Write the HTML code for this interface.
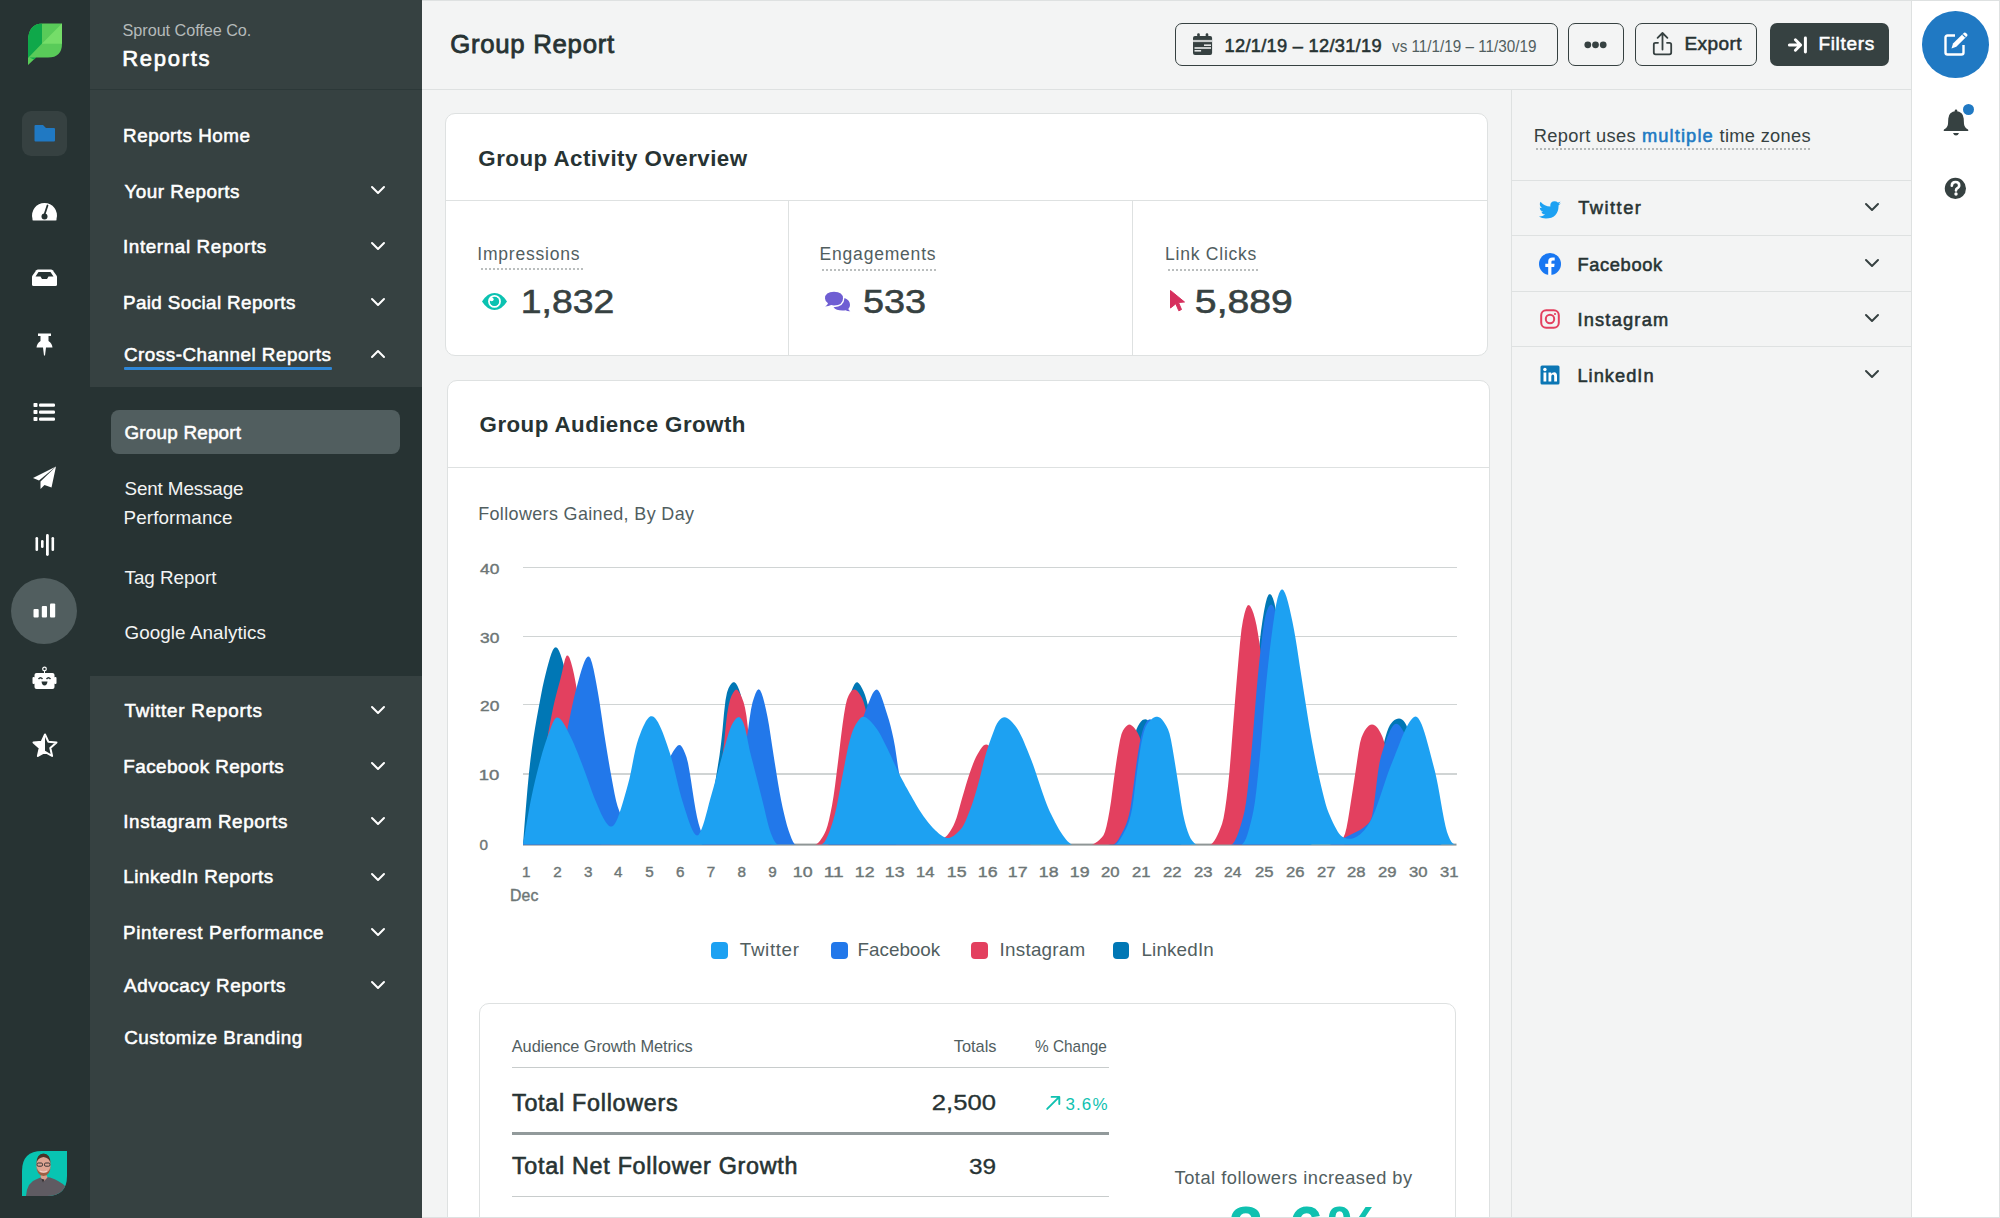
<!DOCTYPE html>
<html><head><meta charset="utf-8"><title>Group Report</title>
<style>
html,body{margin:0;padding:0;}
body{width:2000px;height:1218px;overflow:hidden;position:relative;background:#f3f4f4;font-family:"Liberation Sans",sans-serif;}
.b{position:absolute;}
.t{position:absolute;white-space:nowrap;}
svg.b{overflow:visible;}
</style></head><body>
<div class="b" style="left:0px;top:0px;width:90px;height:1218px;background:#273333"></div>
<div class="b" style="left:90px;top:0px;width:332px;height:1218px;background:#364141"></div>
<div class="b" style="left:90px;top:89px;width:332px;height:1px;background:#2c3838"></div>
<div class="b" style="left:90px;top:387px;width:332px;height:289px;background:#273333"></div>
<div class="b" style="left:422px;top:0px;width:1578px;height:1px;background:#dee1e1"></div>
<div class="b" style="left:422px;top:89px;width:1490px;height:1px;background:#dee1e1"></div>
<div class="b" style="left:1511px;top:90px;width:1px;height:1128px;background:#dee1e1"></div>
<div class="b" style="left:1512px;top:180px;width:400px;height:1px;background:#dee1e1"></div>
<div class="b" style="left:1512px;top:235px;width:400px;height:1px;background:#dee1e1"></div>
<div class="b" style="left:1512px;top:291px;width:400px;height:1px;background:#dee1e1"></div>
<div class="b" style="left:1512px;top:346px;width:400px;height:1px;background:#dee1e1"></div>
<div class="b" style="left:1911px;top:1px;width:89px;height:1217px;background:#fff"></div>
<div class="b" style="left:1911px;top:0px;width:1px;height:1218px;background:#dee1e1"></div>
<div class="b" style="left:1999px;top:0px;width:1px;height:1218px;background:#dee1e1"></div>
<div class="b" style="left:445px;top:113px;width:1043px;height:243px;background:#fff;border:1px solid #dee1e1;border-radius:10px;box-sizing:border-box"></div>
<div class="b" style="left:446px;top:200px;width:1041px;height:1px;background:#dee1e1"></div>
<div class="b" style="left:787.5px;top:201px;width:1px;height:154px;background:#dee1e1"></div>
<div class="b" style="left:1131.5px;top:201px;width:1px;height:154px;background:#dee1e1"></div>
<div class="b" style="left:479.5px;top:267.5px;width:104px;height:2px;background-image:radial-gradient(circle,#6d7676 0.55px,transparent 0.85px);background-size:4px 2px;background-repeat:repeat-x"></div>
<div class="b" style="left:821px;top:268.5px;width:115px;height:2px;background-image:radial-gradient(circle,#6d7676 0.55px,transparent 0.85px);background-size:4px 2px;background-repeat:repeat-x"></div>
<div class="b" style="left:1166.5px;top:268.5px;width:91px;height:2px;background-image:radial-gradient(circle,#6d7676 0.55px,transparent 0.85px);background-size:4px 2px;background-repeat:repeat-x"></div>
<div class="b" style="left:1535px;top:147.5px;width:276px;height:2px;background-image:radial-gradient(circle,#6d7676 0.55px,transparent 0.85px);background-size:4px 2px;background-repeat:repeat-x"></div>
<div class="b" style="left:447px;top:380px;width:1043px;height:900px;background:#fff;border:1px solid #dee1e1;border-radius:10px;box-sizing:border-box"></div>
<div class="b" style="left:448px;top:467px;width:1041px;height:1px;background:#dee1e1"></div>
<div class="b" style="left:523px;top:566.8px;width:933.5px;height:1.3px;background:#d0d4d4"></div>
<div class="b" style="left:523px;top:636.1px;width:933.5px;height:1.3px;background:#d0d4d4"></div>
<div class="b" style="left:523px;top:704.0px;width:933.5px;height:1.3px;background:#d0d4d4"></div>
<div class="b" style="left:523px;top:773.4px;width:933.5px;height:1.3px;background:#d0d4d4"></div>
<svg class="b" style="left:0;top:0" width="2000" height="1218" viewBox="0 0 2000 1218"><rect x="523" y="843.6" width="933.5" height="2" fill="#8f9696"/><path d="M523.0,844.5 L523.0,844.5 L524.5,824.9 L526.0,806.2 L527.5,788.6 L529.0,772.8 L530.5,759.3 L532.0,747.8 L533.5,737.6 L535.0,728.2 L536.5,719.5 L538.0,711.2 L539.5,703.2 L541.0,695.2 L542.5,687.6 L544.0,680.7 L545.5,674.4 L547.0,668.5 L548.5,662.9 L550.0,657.7 L551.5,653.3 L553.0,649.8 L554.5,647.7 L556.0,647.2 L557.5,648.3 L559.0,650.8 L560.5,654.5 L562.0,659.1 L563.5,664.3 L565.0,670.2 L566.5,676.9 L568.0,684.7 L569.5,693.5 L571.0,703.0 L572.5,713.0 L574.0,723.1 L575.5,733.1 L577.0,742.7 L578.5,751.7 L580.0,759.9 L581.5,767.6 L583.0,775.2 L584.5,782.9 L586.0,790.4 L587.5,797.8 L589.0,805.0 L590.5,811.9 L592.0,818.5 L593.5,824.6 L595.0,830.2 L596.5,835.2 L598.0,839.6 L599.5,842.9 L601.0,844.3 L602.5,844.5 L604.0,844.5 L605.5,844.5 L607.0,844.5 L608.5,844.5 L610.0,844.5 L611.5,844.5 L613.0,844.5 L614.5,844.5 L616.0,844.5 L617.5,844.5 L619.0,844.5 L620.5,844.5 L622.0,844.5 L623.5,844.5 L625.0,844.5 L626.5,844.5 L628.0,844.5 L629.5,844.5 L631.0,844.5 L632.5,844.5 L634.0,844.5 L635.5,844.5 L637.0,844.5 L638.5,844.5 L640.0,844.5 L641.5,844.5 L643.0,844.5 L644.5,844.5 L646.0,844.5 L647.5,844.5 L649.0,844.5 L650.5,844.5 L652.0,844.5 L653.5,844.5 L655.0,844.5 L656.5,844.5 L658.0,844.5 L659.5,844.5 L661.0,844.5 L662.5,844.5 L664.0,844.5 L665.5,844.5 L667.0,844.5 L668.5,844.5 L670.0,844.5 L671.5,844.5 L673.0,844.5 L674.5,844.5 L676.0,844.5 L677.5,844.5 L679.0,844.5 L680.5,844.5 L682.0,844.5 L683.5,844.5 L685.0,844.5 L686.5,844.5 L688.0,844.5 L689.5,844.5 L691.0,844.5 L692.5,844.5 L694.0,844.5 L695.5,844.5 L697.0,844.5 L698.5,844.5 L700.0,844.5 L701.5,844.5 L703.0,843.7 L704.5,840.1 L706.0,834.6 L707.5,827.8 L709.0,820.2 L710.5,812.1 L712.0,803.1 L713.5,793.4 L715.0,783.6 L716.5,774.2 L718.0,765.1 L719.5,755.4 L721.0,744.1 L722.5,729.9 L724.0,713.3 L725.5,700.3 L727.0,692.5 L728.5,688.3 L730.0,685.5 L731.5,683.4 L733.0,682.2 L734.5,682.3 L736.0,683.6 L737.5,686.0 L739.0,689.4 L740.5,693.9 L742.0,699.9 L743.5,707.3 L745.0,716.0 L746.5,725.5 L748.0,735.6 L749.5,745.9 L751.0,756.0 L752.5,765.6 L754.0,774.5 L755.5,782.4 L757.0,790.0 L758.5,797.4 L760.0,804.7 L761.5,811.7 L763.0,818.5 L764.5,825.0 L766.0,831.0 L767.5,836.5 L769.0,841.1 L770.5,843.9 L772.0,844.5 L773.5,844.5 L775.0,844.5 L776.5,844.5 L778.0,844.5 L779.5,844.5 L781.0,844.5 L782.5,844.5 L784.0,844.5 L785.5,844.5 L787.0,844.5 L788.5,844.5 L790.0,844.5 L791.5,844.5 L793.0,844.5 L794.5,844.5 L796.0,844.5 L797.5,844.5 L799.0,844.5 L800.5,844.5 L802.0,844.5 L803.5,844.5 L805.0,844.5 L806.5,844.5 L808.0,844.5 L809.5,844.5 L811.0,844.5 L812.5,844.5 L814.0,844.5 L815.5,844.5 L817.0,844.5 L818.5,844.5 L820.0,844.5 L821.5,844.5 L823.0,844.5 L824.5,844.5 L826.0,844.5 L827.5,844.5 L829.0,844.1 L830.5,841.4 L832.0,834.3 L833.5,824.0 L835.0,811.5 L836.5,797.4 L838.0,782.5 L839.5,767.4 L841.0,752.7 L842.5,739.1 L844.0,727.2 L845.5,717.2 L847.0,708.4 L848.5,700.9 L850.0,695.3 L851.5,690.9 L853.0,687.2 L854.5,684.2 L856.0,682.4 L857.5,682.3 L859.0,683.4 L860.5,685.5 L862.0,688.2 L863.5,691.2 L865.0,695.0 L866.5,699.9 L868.0,705.8 L869.5,713.0 L871.0,721.6 L872.5,731.2 L874.0,741.4 L875.5,751.7 L877.0,761.9 L878.5,771.3 L880.0,779.9 L881.5,787.9 L883.0,795.8 L884.5,803.7 L886.0,811.4 L887.5,818.7 L889.0,825.5 L890.5,831.6 L892.0,836.9 L893.5,841.1 L895.0,843.8 L896.5,844.5 L898.0,844.5 L899.5,844.5 L901.0,844.5 L902.5,844.5 L904.0,844.5 L905.5,844.5 L907.0,844.5 L908.5,844.5 L910.0,844.5 L911.5,844.5 L913.0,844.5 L914.5,844.5 L916.0,844.5 L917.5,844.5 L919.0,844.5 L920.5,844.5 L922.0,844.5 L923.5,844.5 L925.0,844.5 L926.5,844.5 L928.0,844.5 L929.5,844.5 L931.0,844.5 L932.5,844.5 L934.0,844.5 L935.5,844.5 L937.0,844.5 L938.5,844.5 L940.0,844.5 L941.5,844.5 L943.0,844.5 L944.5,844.5 L946.0,844.5 L947.5,844.5 L949.0,844.5 L950.5,844.5 L952.0,844.5 L953.5,844.5 L955.0,844.5 L956.5,844.5 L958.0,844.5 L959.5,844.5 L961.0,844.5 L962.5,844.5 L964.0,844.5 L965.5,844.5 L967.0,844.5 L968.5,844.5 L970.0,844.5 L971.5,844.5 L973.0,844.5 L974.5,844.5 L976.0,844.5 L977.5,844.5 L979.0,844.5 L980.5,844.5 L982.0,844.5 L983.5,844.5 L985.0,844.5 L986.5,844.5 L988.0,844.5 L989.5,844.5 L991.0,844.5 L992.5,844.5 L994.0,844.5 L995.5,844.5 L997.0,844.5 L998.5,844.5 L1000.0,844.5 L1001.5,844.5 L1003.0,844.5 L1004.5,844.5 L1006.0,844.5 L1007.5,844.5 L1009.0,844.5 L1010.5,844.5 L1012.0,844.5 L1013.5,844.5 L1015.0,844.5 L1016.5,844.5 L1018.0,844.5 L1019.5,844.5 L1021.0,844.5 L1022.5,844.5 L1024.0,844.5 L1025.5,844.5 L1027.0,844.5 L1028.5,844.5 L1030.0,844.5 L1031.5,844.5 L1033.0,844.5 L1034.5,844.5 L1036.0,844.5 L1037.5,844.5 L1039.0,844.5 L1040.5,844.5 L1042.0,844.5 L1043.5,844.5 L1045.0,844.5 L1046.5,844.5 L1048.0,844.5 L1049.5,844.5 L1051.0,844.5 L1052.5,844.5 L1054.0,844.5 L1055.5,844.5 L1057.0,844.5 L1058.5,844.5 L1060.0,844.5 L1061.5,844.5 L1063.0,844.5 L1064.5,844.5 L1066.0,844.5 L1067.5,844.5 L1069.0,844.5 L1070.5,844.5 L1072.0,844.5 L1073.5,844.5 L1075.0,844.5 L1076.5,844.5 L1078.0,844.5 L1079.5,844.5 L1081.0,844.5 L1082.5,844.5 L1084.0,844.5 L1085.5,844.5 L1087.0,844.5 L1088.5,844.5 L1090.0,844.5 L1091.5,844.5 L1093.0,844.5 L1094.5,844.5 L1096.0,844.5 L1097.5,844.5 L1099.0,844.5 L1100.5,844.5 L1102.0,844.5 L1103.5,844.5 L1105.0,844.5 L1106.5,844.5 L1108.0,844.5 L1109.5,844.2 L1111.0,842.7 L1112.5,840.1 L1114.0,836.8 L1115.5,833.0 L1117.0,828.7 L1118.5,824.0 L1120.0,818.9 L1121.5,813.5 L1123.0,807.9 L1124.5,801.8 L1126.0,794.8 L1127.5,785.9 L1129.0,775.3 L1130.5,764.1 L1132.0,753.0 L1133.5,742.9 L1135.0,734.8 L1136.5,729.3 L1138.0,725.9 L1139.5,723.4 L1141.0,721.5 L1142.5,720.1 L1144.0,719.4 L1145.5,719.2 L1147.0,719.7 L1148.5,720.9 L1150.0,723.0 L1151.5,726.5 L1153.0,731.2 L1154.5,736.8 L1156.0,743.0 L1157.5,749.5 L1159.0,755.9 L1160.5,762.0 L1162.0,768.3 L1163.5,774.9 L1165.0,781.7 L1166.5,788.7 L1168.0,795.7 L1169.5,802.8 L1171.0,809.8 L1172.5,816.5 L1174.0,823.0 L1175.5,829.1 L1177.0,834.8 L1178.5,839.8 L1180.0,843.6 L1181.5,844.5 L1183.0,844.5 L1184.5,844.5 L1186.0,844.5 L1187.5,844.5 L1189.0,844.5 L1190.5,844.5 L1192.0,844.5 L1193.5,844.5 L1195.0,844.5 L1196.5,844.5 L1198.0,844.5 L1199.5,844.5 L1201.0,844.5 L1202.5,844.5 L1204.0,844.5 L1205.5,844.5 L1207.0,844.5 L1208.5,844.5 L1210.0,844.5 L1211.5,844.5 L1213.0,844.5 L1214.5,844.5 L1216.0,844.5 L1217.5,844.5 L1219.0,844.5 L1220.5,844.5 L1222.0,844.5 L1223.5,844.5 L1225.0,844.5 L1226.5,844.5 L1228.0,844.5 L1229.5,844.5 L1231.0,844.5 L1232.5,844.5 L1234.0,844.3 L1235.5,842.9 L1237.0,839.3 L1238.5,834.0 L1240.0,827.3 L1241.5,819.4 L1243.0,810.5 L1244.5,800.7 L1246.0,790.2 L1247.5,779.2 L1249.0,767.7 L1250.5,755.0 L1252.0,739.5 L1253.5,721.0 L1255.0,700.7 L1256.5,680.1 L1258.0,660.7 L1259.5,644.0 L1261.0,630.9 L1262.5,620.4 L1264.0,611.3 L1265.5,603.8 L1267.0,598.1 L1268.5,594.8 L1270.0,594.0 L1271.5,595.2 L1273.0,598.4 L1274.5,603.5 L1276.0,610.8 L1277.5,620.2 L1279.0,631.3 L1280.5,643.6 L1282.0,656.2 L1283.5,668.4 L1285.0,679.9 L1286.5,691.0 L1288.0,702.5 L1289.5,714.4 L1291.0,726.6 L1292.5,738.9 L1294.0,751.2 L1295.5,763.4 L1297.0,775.2 L1298.5,786.7 L1300.0,797.5 L1301.5,807.6 L1303.0,816.8 L1304.5,825.0 L1306.0,832.1 L1307.5,837.8 L1309.0,842.0 L1310.5,844.1 L1312.0,844.5 L1313.5,844.5 L1315.0,844.5 L1316.5,844.5 L1318.0,844.5 L1319.5,844.5 L1321.0,844.5 L1322.5,844.5 L1324.0,844.5 L1325.5,844.5 L1327.0,844.5 L1328.5,844.5 L1330.0,844.5 L1331.5,844.5 L1333.0,844.5 L1334.5,844.5 L1336.0,844.5 L1337.5,844.5 L1339.0,844.5 L1340.5,844.5 L1342.0,844.5 L1343.5,844.5 L1345.0,844.1 L1346.5,842.6 L1348.0,840.7 L1349.5,838.6 L1351.0,836.5 L1352.5,834.3 L1354.0,831.9 L1355.5,829.5 L1357.0,827.0 L1358.5,824.3 L1360.0,821.5 L1361.5,818.6 L1363.0,815.6 L1364.5,812.5 L1366.0,809.3 L1367.5,805.9 L1369.0,802.4 L1370.5,798.5 L1372.0,794.0 L1373.5,788.7 L1375.0,782.8 L1376.5,776.3 L1378.0,769.5 L1379.5,762.6 L1381.0,755.7 L1382.5,749.1 L1384.0,742.8 L1385.5,737.1 L1387.0,732.1 L1388.5,728.1 L1390.0,725.1 L1391.5,723.0 L1393.0,721.3 L1394.5,720.1 L1396.0,719.2 L1397.5,718.7 L1399.0,718.5 L1400.5,718.7 L1402.0,719.5 L1403.5,720.8 L1405.0,722.7 L1406.5,725.6 L1408.0,730.2 L1409.5,736.3 L1411.0,743.6 L1412.5,751.7 L1414.0,760.2 L1415.5,768.7 L1417.0,776.7 L1418.5,783.8 L1420.0,789.8 L1421.5,795.2 L1423.0,800.3 L1424.5,805.4 L1426.0,810.4 L1427.5,815.3 L1429.0,819.9 L1430.5,824.4 L1432.0,828.5 L1433.5,832.4 L1435.0,835.9 L1436.5,839.0 L1438.0,841.6 L1439.5,843.6 L1441.0,844.4 L1442.5,844.5 L1444.0,844.5 L1445.5,844.5 L1447.0,844.5 L1448.5,844.5 L1450.0,844.5 L1451.5,844.5 L1453.0,844.5 L1454.5,844.5 L1456.0,844.5 L1456.5,844.5 Z" fill="#0077b5"/>
<path d="M523.0,844.5 L523.0,844.5 L524.5,840.4 L526.0,836.1 L527.5,831.3 L529.0,826.2 L530.5,820.6 L532.0,814.8 L533.5,808.7 L535.0,802.4 L536.5,795.9 L538.0,789.1 L539.5,782.2 L541.0,774.9 L542.5,766.8 L544.0,758.1 L545.5,749.1 L547.0,740.1 L548.5,731.6 L550.0,723.5 L551.5,715.7 L553.0,708.3 L554.5,701.5 L556.0,695.4 L557.5,689.8 L559.0,684.3 L560.5,678.8 L562.0,672.6 L563.5,665.6 L565.0,659.3 L566.5,655.8 L568.0,655.5 L569.5,657.8 L571.0,662.2 L572.5,667.8 L574.0,674.3 L575.5,681.9 L577.0,690.8 L578.5,700.4 L580.0,709.9 L581.5,719.3 L583.0,728.9 L584.5,738.7 L586.0,748.5 L587.5,758.3 L589.0,767.7 L590.5,776.7 L592.0,785.2 L593.5,792.9 L595.0,799.9 L596.5,806.1 L598.0,812.0 L599.5,817.6 L601.0,822.7 L602.5,827.5 L604.0,831.8 L605.5,835.7 L607.0,839.1 L608.5,842.0 L610.0,844.0 L611.5,844.5 L613.0,844.5 L614.5,844.5 L616.0,844.5 L617.5,844.5 L619.0,844.5 L620.5,844.5 L622.0,844.5 L623.5,844.5 L625.0,844.5 L626.5,844.5 L628.0,844.5 L629.5,844.5 L631.0,844.5 L632.5,844.5 L634.0,844.5 L635.5,844.5 L637.0,844.5 L638.5,844.5 L640.0,844.5 L641.5,844.5 L643.0,844.5 L644.5,844.5 L646.0,844.5 L647.5,844.5 L649.0,844.5 L650.5,844.5 L652.0,844.5 L653.5,844.5 L655.0,844.5 L656.5,844.5 L658.0,844.5 L659.5,844.5 L661.0,844.5 L662.5,844.5 L664.0,844.5 L665.5,844.5 L667.0,844.5 L668.5,844.5 L670.0,844.5 L671.5,844.5 L673.0,844.5 L674.5,844.5 L676.0,844.5 L677.5,844.5 L679.0,844.5 L680.5,844.5 L682.0,844.5 L683.5,844.5 L685.0,844.5 L686.5,844.5 L688.0,844.5 L689.5,844.5 L691.0,844.5 L692.5,844.5 L694.0,844.5 L695.5,844.5 L697.0,844.5 L698.5,844.5 L700.0,844.5 L701.5,844.5 L703.0,844.5 L704.5,844.0 L706.0,841.8 L707.5,837.3 L709.0,831.4 L710.5,824.3 L712.0,816.6 L713.5,808.5 L715.0,800.4 L716.5,792.2 L718.0,783.5 L719.5,774.3 L721.0,765.1 L722.5,755.6 L724.0,744.0 L725.5,728.3 L727.0,714.9 L728.5,705.9 L730.0,699.8 L731.5,695.8 L733.0,692.9 L734.5,690.7 L736.0,689.6 L737.5,690.0 L739.0,691.9 L740.5,694.6 L742.0,697.9 L743.5,701.9 L745.0,707.7 L746.5,716.3 L748.0,728.9 L749.5,740.4 L751.0,750.6 L752.5,760.1 L754.0,769.1 L755.5,777.4 L757.0,785.1 L758.5,792.4 L760.0,799.6 L761.5,807.0 L763.0,814.3 L764.5,821.4 L766.0,827.9 L767.5,833.7 L769.0,838.5 L770.5,842.0 L772.0,844.0 L773.5,844.5 L775.0,844.5 L776.5,844.5 L778.0,844.5 L779.5,844.5 L781.0,844.5 L782.5,844.5 L784.0,844.5 L785.5,844.5 L787.0,844.5 L788.5,844.5 L790.0,844.5 L791.5,844.5 L793.0,844.5 L794.5,844.5 L796.0,844.5 L797.5,844.5 L799.0,844.5 L800.5,844.5 L802.0,844.5 L803.5,844.5 L805.0,844.5 L806.5,844.5 L808.0,844.5 L809.5,844.5 L811.0,844.5 L812.5,844.5 L814.0,844.5 L815.5,844.4 L817.0,843.8 L818.5,842.4 L820.0,840.7 L821.5,838.6 L823.0,836.2 L824.5,833.6 L826.0,830.3 L827.5,825.8 L829.0,820.0 L830.5,813.1 L832.0,805.4 L833.5,796.6 L835.0,786.0 L836.5,774.1 L838.0,761.9 L839.5,749.4 L841.0,736.7 L842.5,724.9 L844.0,714.5 L845.5,705.7 L847.0,699.5 L848.5,695.8 L850.0,693.1 L851.5,691.0 L853.0,689.7 L854.5,689.4 L856.0,690.0 L857.5,691.3 L859.0,693.2 L860.5,695.4 L862.0,698.1 L863.5,701.8 L865.0,706.9 L866.5,713.0 L868.0,720.0 L869.5,728.1 L871.0,737.2 L872.5,746.8 L874.0,756.7 L875.5,766.3 L877.0,775.2 L878.5,783.1 L880.0,789.8 L881.5,795.6 L883.0,801.0 L884.5,806.2 L886.0,811.1 L887.5,815.6 L889.0,819.7 L890.5,823.2 L892.0,826.1 L893.5,828.3 L895.0,829.9 L896.5,831.1 L898.0,832.1 L899.5,833.1 L901.0,834.1 L902.5,835.0 L904.0,835.9 L905.5,836.7 L907.0,837.5 L908.5,838.3 L910.0,838.9 L911.5,839.6 L913.0,840.2 L914.5,840.7 L916.0,841.2 L917.5,841.6 L919.0,841.9 L920.5,842.2 L922.0,842.5 L923.5,842.7 L925.0,842.8 L926.5,842.8 L928.0,842.8 L929.5,842.7 L931.0,842.5 L932.5,842.3 L934.0,842.0 L935.5,841.6 L937.0,841.2 L938.5,840.6 L940.0,840.0 L941.5,839.3 L943.0,838.5 L944.5,837.6 L946.0,836.4 L947.5,834.9 L949.0,833.0 L950.5,830.8 L952.0,828.3 L953.5,825.4 L955.0,822.1 L956.5,817.9 L958.0,812.9 L959.5,807.5 L961.0,802.0 L962.5,796.8 L964.0,791.7 L965.5,786.5 L967.0,781.5 L968.5,776.7 L970.0,772.2 L971.5,767.9 L973.0,763.9 L974.5,760.2 L976.0,757.0 L977.5,754.2 L979.0,751.7 L980.5,749.3 L982.0,747.2 L983.5,745.6 L985.0,744.7 L986.5,744.4 L988.0,745.0 L989.5,746.2 L991.0,748.0 L992.5,750.3 L994.0,752.9 L995.5,755.8 L997.0,758.8 L998.5,761.9 L1000.0,765.0 L1001.5,768.3 L1003.0,772.0 L1004.5,776.0 L1006.0,780.4 L1007.5,784.9 L1009.0,789.7 L1010.5,794.6 L1012.0,799.6 L1013.5,804.6 L1015.0,809.6 L1016.5,814.4 L1018.0,819.1 L1019.5,823.6 L1021.0,827.8 L1022.5,831.7 L1024.0,835.3 L1025.5,838.3 L1027.0,840.9 L1028.5,842.9 L1030.0,844.2 L1031.5,844.5 L1033.0,844.5 L1034.5,844.5 L1036.0,844.5 L1037.5,844.5 L1039.0,844.5 L1040.5,844.5 L1042.0,844.5 L1043.5,844.5 L1045.0,844.5 L1046.5,844.5 L1048.0,844.5 L1049.5,844.5 L1051.0,844.5 L1052.5,844.5 L1054.0,844.5 L1055.5,844.5 L1057.0,844.5 L1058.5,844.5 L1060.0,844.5 L1061.5,844.5 L1063.0,844.5 L1064.5,844.5 L1066.0,844.5 L1067.5,844.5 L1069.0,844.5 L1070.5,844.5 L1072.0,844.5 L1073.5,844.5 L1075.0,844.5 L1076.5,844.5 L1078.0,844.5 L1079.5,844.5 L1081.0,844.5 L1082.5,844.5 L1084.0,844.5 L1085.5,844.5 L1087.0,844.5 L1088.5,844.5 L1090.0,844.5 L1091.5,844.5 L1093.0,844.2 L1094.5,843.5 L1096.0,842.6 L1097.5,841.5 L1099.0,840.2 L1100.5,838.8 L1102.0,837.2 L1103.5,835.2 L1105.0,831.8 L1106.5,826.3 L1108.0,819.3 L1109.5,811.1 L1111.0,801.4 L1112.5,790.1 L1114.0,778.5 L1115.5,767.7 L1117.0,757.5 L1118.5,748.3 L1120.0,740.1 L1121.5,734.0 L1123.0,730.5 L1124.5,728.2 L1126.0,726.4 L1127.5,725.2 L1129.0,724.6 L1130.5,724.8 L1132.0,725.7 L1133.5,727.0 L1135.0,728.8 L1136.5,730.9 L1138.0,733.5 L1139.5,736.7 L1141.0,741.0 L1142.5,745.9 L1144.0,751.3 L1145.5,757.1 L1147.0,763.4 L1148.5,770.3 L1150.0,777.5 L1151.5,784.8 L1153.0,791.7 L1154.5,798.0 L1156.0,803.7 L1157.5,809.3 L1159.0,814.9 L1160.5,820.3 L1162.0,825.5 L1163.5,830.3 L1165.0,834.6 L1166.5,838.4 L1168.0,841.5 L1169.5,843.6 L1171.0,844.4 L1172.5,844.5 L1174.0,844.5 L1175.5,844.5 L1177.0,844.5 L1178.5,844.5 L1180.0,844.5 L1181.5,844.5 L1183.0,844.5 L1184.5,844.5 L1186.0,844.5 L1187.5,844.5 L1189.0,844.5 L1190.5,844.5 L1192.0,844.5 L1193.5,844.5 L1195.0,844.5 L1196.5,844.5 L1198.0,844.5 L1199.5,844.5 L1201.0,844.5 L1202.5,844.5 L1204.0,844.5 L1205.5,844.5 L1207.0,844.5 L1208.5,844.5 L1210.0,844.4 L1211.5,844.0 L1213.0,842.6 L1214.5,840.6 L1216.0,838.0 L1217.5,835.0 L1219.0,831.7 L1220.5,828.0 L1222.0,823.9 L1223.5,818.2 L1225.0,809.8 L1226.5,799.0 L1228.0,786.3 L1229.5,771.3 L1231.0,753.1 L1232.5,733.3 L1234.0,714.0 L1235.5,695.1 L1237.0,676.9 L1238.5,659.4 L1240.0,642.7 L1241.5,629.3 L1243.0,620.2 L1244.5,613.5 L1246.0,608.5 L1247.5,605.5 L1249.0,605.0 L1250.5,606.5 L1252.0,609.4 L1253.5,613.5 L1255.0,618.7 L1256.5,625.3 L1258.0,633.8 L1259.5,643.6 L1261.0,653.8 L1262.5,664.5 L1264.0,675.7 L1265.5,687.3 L1267.0,699.2 L1268.5,711.2 L1270.0,723.1 L1271.5,734.8 L1273.0,745.9 L1274.5,756.6 L1276.0,766.9 L1277.5,777.7 L1279.0,788.7 L1280.5,799.7 L1282.0,810.2 L1283.5,820.0 L1285.0,828.6 L1286.5,835.6 L1288.0,840.7 L1289.5,843.6 L1291.0,844.4 L1292.5,844.5 L1294.0,844.5 L1295.5,844.5 L1297.0,844.5 L1298.5,844.5 L1300.0,844.5 L1301.5,844.5 L1303.0,844.5 L1304.5,844.5 L1306.0,844.5 L1307.5,844.5 L1309.0,844.5 L1310.5,844.5 L1312.0,844.5 L1313.5,844.5 L1315.0,844.5 L1316.5,844.5 L1318.0,844.5 L1319.5,844.5 L1321.0,844.5 L1322.5,844.5 L1324.0,844.5 L1325.5,844.5 L1327.0,844.5 L1328.5,844.5 L1330.0,844.4 L1331.5,844.1 L1333.0,843.6 L1334.5,843.1 L1336.0,842.5 L1337.5,841.8 L1339.0,841.0 L1340.5,840.0 L1342.0,838.9 L1343.5,837.2 L1345.0,833.8 L1346.5,827.9 L1348.0,819.9 L1349.5,810.7 L1351.0,801.0 L1352.5,791.5 L1354.0,781.8 L1355.5,771.7 L1357.0,761.6 L1358.5,751.5 L1360.0,742.9 L1361.5,737.5 L1363.0,733.9 L1364.5,731.1 L1366.0,728.7 L1367.5,726.9 L1369.0,725.5 L1370.5,724.7 L1372.0,724.5 L1373.5,724.7 L1375.0,725.5 L1376.5,726.8 L1378.0,728.6 L1379.5,731.0 L1381.0,733.7 L1382.5,737.1 L1384.0,741.4 L1385.5,747.4 L1387.0,755.0 L1388.5,763.7 L1390.0,772.9 L1391.5,782.0 L1393.0,790.4 L1394.5,797.7 L1396.0,803.8 L1397.5,809.5 L1399.0,815.0 L1400.5,820.4 L1402.0,825.4 L1403.5,830.1 L1405.0,834.4 L1406.5,838.1 L1408.0,841.2 L1409.5,843.5 L1411.0,844.4 L1412.5,844.5 L1414.0,844.5 L1415.5,844.5 L1417.0,844.5 L1418.5,844.5 L1420.0,844.5 L1421.5,844.5 L1423.0,844.5 L1424.5,844.5 L1426.0,844.5 L1427.5,844.5 L1429.0,844.5 L1430.5,844.5 L1432.0,844.5 L1433.5,844.5 L1435.0,844.5 L1436.5,844.5 L1438.0,844.5 L1439.5,844.5 L1441.0,844.5 L1442.5,844.5 L1444.0,844.5 L1445.5,844.5 L1447.0,844.5 L1448.5,844.5 L1450.0,844.5 L1451.5,844.5 L1453.0,844.5 L1454.5,844.5 L1456.0,844.5 L1456.5,844.5 Z" fill="#e3405f"/>
<path d="M523.0,844.5 L523.0,844.5 L524.5,840.2 L526.0,836.0 L527.5,831.9 L529.0,827.8 L530.5,823.8 L532.0,819.9 L533.5,816.0 L535.0,812.2 L536.5,808.5 L538.0,804.8 L539.5,801.2 L541.0,797.8 L542.5,794.6 L544.0,791.6 L545.5,788.9 L547.0,786.3 L548.5,783.7 L550.0,781.2 L551.5,778.6 L553.0,775.9 L554.5,773.0 L556.0,769.9 L557.5,766.5 L559.0,762.6 L560.5,758.3 L562.0,753.2 L563.5,747.3 L565.0,740.7 L566.5,733.7 L568.0,726.3 L569.5,718.9 L571.0,711.5 L572.5,704.4 L574.0,697.7 L575.5,691.6 L577.0,685.9 L578.5,680.4 L580.0,675.0 L581.5,669.9 L583.0,665.4 L584.5,661.5 L586.0,658.6 L587.5,656.8 L589.0,656.6 L590.5,658.5 L592.0,662.9 L593.5,669.1 L595.0,676.6 L596.5,684.6 L598.0,693.0 L599.5,702.0 L601.0,712.0 L602.5,722.3 L604.0,732.4 L605.5,741.9 L607.0,751.2 L608.5,760.2 L610.0,768.9 L611.5,777.3 L613.0,785.6 L614.5,793.5 L616.0,800.4 L617.5,805.9 L619.0,810.3 L620.5,814.2 L622.0,818.1 L623.5,822.5 L625.0,827.3 L626.5,831.8 L628.0,835.4 L629.5,837.4 L631.0,837.7 L632.5,836.9 L634.0,835.3 L635.5,833.2 L637.0,830.6 L638.5,827.6 L640.0,824.2 L641.5,820.6 L643.0,816.8 L644.5,813.0 L646.0,809.3 L647.5,805.6 L649.0,802.2 L650.5,799.0 L652.0,795.8 L653.5,792.6 L655.0,789.3 L656.5,785.9 L658.0,782.6 L659.5,779.2 L661.0,775.8 L662.5,772.5 L664.0,769.2 L665.5,766.1 L667.0,763.0 L668.5,760.0 L670.0,757.1 L671.5,754.4 L673.0,751.8 L674.5,749.4 L676.0,747.4 L677.5,745.8 L679.0,745.0 L680.5,745.3 L682.0,747.0 L683.5,749.7 L685.0,753.2 L686.5,757.3 L688.0,763.1 L689.5,771.2 L691.0,780.6 L692.5,790.6 L694.0,800.3 L695.5,809.3 L697.0,816.9 L698.5,823.2 L700.0,828.2 L701.5,832.5 L703.0,835.6 L704.5,836.8 L706.0,836.9 L707.5,836.3 L709.0,835.3 L710.5,833.9 L712.0,832.2 L713.5,830.2 L715.0,828.0 L716.5,825.7 L718.0,823.3 L719.5,820.8 L721.0,818.3 L722.5,815.5 L724.0,812.6 L725.5,809.4 L727.0,806.0 L728.5,802.4 L730.0,798.6 L731.5,794.7 L733.0,790.6 L734.5,786.4 L736.0,782.0 L737.5,777.6 L739.0,773.0 L740.5,768.2 L742.0,762.5 L743.5,755.8 L745.0,748.2 L746.5,739.8 L748.0,730.3 L749.5,719.2 L751.0,709.4 L752.5,702.6 L754.0,697.7 L755.5,693.6 L757.0,690.6 L758.5,689.2 L760.0,690.1 L761.5,693.0 L763.0,697.5 L764.5,703.2 L766.0,709.7 L767.5,716.9 L769.0,725.3 L770.5,735.0 L772.0,745.1 L773.5,754.8 L775.0,764.3 L776.5,773.8 L778.0,783.1 L779.5,791.8 L781.0,799.7 L782.5,806.9 L784.0,813.6 L785.5,819.8 L787.0,825.4 L788.5,830.3 L790.0,834.6 L791.5,838.5 L793.0,841.8 L794.5,844.0 L796.0,844.5 L797.5,844.5 L799.0,844.5 L800.5,844.5 L802.0,844.5 L803.5,844.5 L805.0,844.5 L806.5,844.5 L808.0,844.5 L809.5,844.5 L811.0,844.5 L812.5,844.5 L814.0,844.5 L815.5,844.5 L817.0,844.5 L818.5,844.5 L820.0,844.5 L821.5,844.5 L823.0,844.5 L824.5,844.5 L826.0,844.5 L827.5,844.5 L829.0,844.3 L830.5,843.0 L832.0,839.7 L833.5,835.0 L835.0,829.5 L836.5,823.2 L838.0,816.3 L839.5,809.1 L841.0,801.6 L842.5,794.0 L844.0,786.5 L845.5,779.2 L847.0,772.2 L848.5,765.9 L850.0,760.1 L851.5,754.7 L853.0,749.5 L854.5,744.4 L856.0,739.4 L857.5,734.5 L859.0,729.7 L860.5,725.1 L862.0,720.6 L863.5,716.4 L865.0,712.3 L866.5,708.4 L868.0,704.5 L869.5,700.7 L871.0,697.0 L872.5,693.8 L874.0,691.4 L875.5,689.9 L877.0,689.6 L878.5,690.8 L880.0,693.3 L881.5,696.9 L883.0,701.2 L884.5,705.9 L886.0,710.7 L887.5,715.4 L889.0,720.3 L890.5,725.8 L892.0,732.0 L893.5,738.8 L895.0,746.7 L896.5,756.7 L898.0,767.1 L899.5,775.6 L901.0,782.8 L902.5,789.7 L904.0,796.2 L905.5,802.5 L907.0,808.4 L908.5,813.8 L910.0,818.6 L911.5,822.9 L913.0,826.4 L914.5,829.1 L916.0,831.3 L917.5,833.3 L919.0,835.2 L920.5,837.0 L922.0,838.6 L923.5,840.1 L925.0,841.5 L926.5,842.6 L928.0,843.6 L929.5,844.2 L931.0,844.5 L932.5,844.5 L934.0,844.5 L935.5,844.5 L937.0,844.5 L938.5,844.5 L940.0,844.5 L941.5,844.5 L943.0,844.5 L944.5,844.5 L946.0,844.5 L947.5,844.5 L949.0,844.5 L950.5,844.5 L952.0,844.5 L953.5,844.5 L955.0,844.5 L956.5,844.5 L958.0,844.5 L959.5,844.5 L961.0,844.5 L962.5,844.5 L964.0,844.5 L965.5,844.5 L967.0,844.5 L968.5,844.5 L970.0,844.5 L971.5,844.5 L973.0,844.5 L974.5,844.5 L976.0,844.5 L977.5,844.5 L979.0,844.5 L980.5,844.5 L982.0,844.5 L983.5,844.5 L985.0,844.5 L986.5,844.5 L988.0,844.5 L989.5,844.5 L991.0,844.5 L992.5,844.5 L994.0,844.5 L995.5,844.5 L997.0,844.5 L998.5,844.5 L1000.0,844.5 L1001.5,844.5 L1003.0,844.5 L1004.5,844.5 L1006.0,844.5 L1007.5,844.5 L1009.0,844.5 L1010.5,844.5 L1012.0,844.5 L1013.5,844.5 L1015.0,844.5 L1016.5,844.5 L1018.0,844.5 L1019.5,844.5 L1021.0,844.5 L1022.5,844.5 L1024.0,844.5 L1025.5,844.5 L1027.0,844.5 L1028.5,844.5 L1030.0,844.5 L1031.5,844.5 L1033.0,844.5 L1034.5,844.5 L1036.0,844.5 L1037.5,844.5 L1039.0,844.5 L1040.5,844.5 L1042.0,844.5 L1043.5,844.5 L1045.0,844.5 L1046.5,844.5 L1048.0,844.5 L1049.5,844.5 L1051.0,844.5 L1052.5,844.5 L1054.0,844.5 L1055.5,844.5 L1057.0,844.5 L1058.5,844.5 L1060.0,844.5 L1061.5,844.5 L1063.0,844.5 L1064.5,844.5 L1066.0,844.5 L1067.5,844.5 L1069.0,844.5 L1070.5,844.5 L1072.0,844.5 L1073.5,844.5 L1075.0,844.5 L1076.5,844.5 L1078.0,844.5 L1079.5,844.5 L1081.0,844.5 L1082.5,844.5 L1084.0,844.5 L1085.5,844.5 L1087.0,844.5 L1088.5,844.5 L1090.0,844.5 L1091.5,844.5 L1093.0,844.5 L1094.5,844.5 L1096.0,844.5 L1097.5,844.5 L1099.0,844.5 L1100.5,844.5 L1102.0,844.5 L1103.5,844.5 L1105.0,844.5 L1106.5,844.5 L1108.0,844.5 L1109.5,844.5 L1111.0,844.5 L1112.5,844.5 L1114.0,844.3 L1115.5,843.3 L1117.0,841.5 L1118.5,839.3 L1120.0,836.6 L1121.5,833.8 L1123.0,830.9 L1124.5,827.9 L1126.0,824.5 L1127.5,820.2 L1129.0,814.8 L1130.5,807.7 L1132.0,797.7 L1133.5,785.9 L1135.0,774.2 L1136.5,763.2 L1138.0,752.9 L1139.5,743.9 L1141.0,736.8 L1142.5,730.9 L1144.0,726.4 L1145.5,723.4 L1147.0,721.1 L1148.5,719.7 L1150.0,719.2 L1151.5,719.8 L1153.0,721.2 L1154.5,723.3 L1156.0,725.9 L1157.5,729.0 L1159.0,732.5 L1160.5,736.6 L1162.0,741.5 L1163.5,747.2 L1165.0,753.8 L1166.5,760.8 L1168.0,768.2 L1169.5,775.6 L1171.0,782.9 L1172.5,789.8 L1174.0,796.1 L1175.5,801.8 L1177.0,807.2 L1178.5,812.6 L1180.0,818.0 L1181.5,823.1 L1183.0,828.0 L1184.5,832.5 L1186.0,836.6 L1187.5,840.0 L1189.0,842.7 L1190.5,844.2 L1192.0,844.5 L1193.5,844.5 L1195.0,844.5 L1196.5,844.5 L1198.0,844.5 L1199.5,844.5 L1201.0,844.5 L1202.5,844.5 L1204.0,844.5 L1205.5,844.5 L1207.0,844.5 L1208.5,844.5 L1210.0,844.5 L1211.5,844.5 L1213.0,844.5 L1214.5,844.5 L1216.0,844.5 L1217.5,844.5 L1219.0,844.5 L1220.5,844.5 L1222.0,844.5 L1223.5,844.5 L1225.0,844.5 L1226.5,844.5 L1228.0,844.5 L1229.5,844.5 L1231.0,844.4 L1232.5,843.9 L1234.0,842.2 L1235.5,839.6 L1237.0,836.3 L1238.5,832.3 L1240.0,827.8 L1241.5,822.8 L1243.0,817.4 L1244.5,811.2 L1246.0,802.5 L1247.5,790.9 L1249.0,777.1 L1250.5,762.0 L1252.0,745.8 L1253.5,727.7 L1255.0,708.9 L1256.5,691.1 L1258.0,674.7 L1259.5,659.5 L1261.0,645.9 L1262.5,633.6 L1264.0,623.1 L1265.5,615.6 L1267.0,610.6 L1268.5,607.1 L1270.0,605.0 L1271.5,604.6 L1273.0,605.9 L1274.5,609.1 L1276.0,614.4 L1277.5,622.3 L1279.0,632.6 L1280.5,644.3 L1282.0,656.6 L1283.5,668.6 L1285.0,679.9 L1286.5,690.9 L1288.0,702.4 L1289.5,714.5 L1291.0,727.0 L1292.5,739.8 L1294.0,752.6 L1295.5,765.3 L1297.0,777.7 L1298.5,789.6 L1300.0,800.7 L1301.5,811.1 L1303.0,820.3 L1304.5,828.3 L1306.0,834.9 L1307.5,839.9 L1309.0,843.0 L1310.5,844.3 L1312.0,844.5 L1313.5,844.5 L1315.0,844.5 L1316.5,844.5 L1318.0,844.5 L1319.5,844.5 L1321.0,844.5 L1322.5,844.5 L1324.0,844.5 L1325.5,844.5 L1327.0,844.5 L1328.5,844.5 L1330.0,844.4 L1331.5,843.8 L1333.0,843.2 L1334.5,842.5 L1336.0,841.8 L1337.5,841.1 L1339.0,840.4 L1340.5,839.6 L1342.0,838.9 L1343.5,838.2 L1345.0,837.4 L1346.5,836.7 L1348.0,836.0 L1349.5,835.2 L1351.0,834.5 L1352.5,833.8 L1354.0,833.1 L1355.5,832.3 L1357.0,831.6 L1358.5,830.7 L1360.0,829.9 L1361.5,828.9 L1363.0,827.9 L1364.5,826.8 L1366.0,825.6 L1367.5,824.2 L1369.0,822.7 L1370.5,820.6 L1372.0,816.2 L1373.5,807.8 L1375.0,796.5 L1376.5,784.0 L1378.0,772.1 L1379.5,762.7 L1381.0,756.3 L1382.5,751.2 L1384.0,746.5 L1385.5,742.0 L1387.0,737.8 L1388.5,734.0 L1390.0,730.7 L1391.5,727.9 L1393.0,725.8 L1394.5,724.3 L1396.0,723.7 L1397.5,723.9 L1399.0,725.0 L1400.5,726.8 L1402.0,729.0 L1403.5,731.6 L1405.0,734.6 L1406.5,738.0 L1408.0,741.5 L1409.5,745.3 L1411.0,749.2 L1412.5,753.2 L1414.0,757.3 L1415.5,761.5 L1417.0,765.9 L1418.5,770.8 L1420.0,776.0 L1421.5,781.5 L1423.0,787.2 L1424.5,793.0 L1426.0,798.9 L1427.5,804.8 L1429.0,810.6 L1430.5,816.3 L1432.0,821.7 L1433.5,826.9 L1435.0,831.7 L1436.5,836.1 L1438.0,840.0 L1439.5,843.0 L1441.0,844.3 L1442.5,844.5 L1444.0,844.5 L1445.5,844.5 L1447.0,844.5 L1448.5,844.5 L1450.0,844.5 L1451.5,844.5 L1453.0,844.5 L1454.5,844.5 L1456.0,844.5 L1456.5,844.5 Z" fill="#2278ea"/>
<path d="M523.0,844.5 L523.0,844.5 L524.5,835.5 L526.0,826.7 L527.5,818.1 L529.0,809.8 L530.5,801.8 L532.0,794.4 L533.5,787.4 L535.0,780.9 L536.5,774.8 L538.0,768.8 L539.5,763.0 L541.0,757.4 L542.5,752.1 L544.0,747.2 L545.5,742.6 L547.0,738.3 L548.5,734.1 L550.0,729.9 L551.5,725.8 L553.0,722.2 L554.5,719.5 L556.0,717.8 L557.5,717.4 L559.0,718.0 L560.5,719.2 L562.0,721.0 L563.5,723.2 L565.0,725.7 L566.5,728.5 L568.0,731.5 L569.5,734.5 L571.0,737.5 L572.5,740.7 L574.0,744.1 L575.5,747.7 L577.0,751.3 L578.5,755.1 L580.0,759.0 L581.5,762.8 L583.0,766.7 L584.5,770.7 L586.0,774.8 L587.5,779.0 L589.0,783.3 L590.5,787.6 L592.0,791.7 L593.5,795.8 L595.0,799.5 L596.5,803.1 L598.0,806.6 L599.5,810.0 L601.0,813.4 L602.5,816.5 L604.0,819.3 L605.5,821.8 L607.0,823.8 L608.5,825.4 L610.0,826.4 L611.5,826.6 L613.0,825.9 L614.5,824.2 L616.0,821.7 L617.5,818.4 L619.0,814.5 L620.5,810.1 L622.0,805.3 L623.5,800.2 L625.0,795.0 L626.5,789.7 L628.0,784.3 L629.5,778.4 L631.0,771.4 L632.5,763.7 L634.0,756.0 L635.5,749.0 L637.0,743.2 L638.5,738.6 L640.0,734.5 L641.5,730.6 L643.0,727.1 L644.5,723.9 L646.0,721.1 L647.5,718.9 L649.0,717.3 L650.5,716.3 L652.0,716.2 L653.5,716.7 L655.0,718.0 L656.5,719.9 L658.0,722.3 L659.5,725.2 L661.0,728.5 L662.5,732.1 L664.0,736.1 L665.5,740.2 L667.0,744.5 L668.5,748.9 L670.0,753.4 L671.5,758.4 L673.0,764.0 L674.5,770.0 L676.0,776.3 L677.5,782.6 L679.0,788.7 L680.5,794.5 L682.0,799.8 L683.5,804.6 L685.0,809.4 L686.5,814.1 L688.0,818.7 L689.5,823.0 L691.0,826.9 L692.5,830.2 L694.0,832.9 L695.5,834.8 L697.0,835.6 L698.5,834.9 L700.0,832.6 L701.5,829.3 L703.0,825.3 L704.5,820.4 L706.0,815.1 L707.5,809.4 L709.0,803.6 L710.5,798.1 L712.0,792.8 L713.5,787.5 L715.0,782.1 L716.5,776.5 L718.0,770.9 L719.5,765.4 L721.0,759.9 L722.5,754.6 L724.0,749.2 L725.5,743.9 L727.0,738.5 L728.5,733.5 L730.0,729.2 L731.5,725.5 L733.0,722.7 L734.5,720.4 L736.0,718.6 L737.5,717.4 L739.0,717.1 L740.5,717.9 L742.0,720.1 L743.5,723.2 L745.0,727.7 L746.5,734.3 L748.0,742.1 L749.5,749.4 L751.0,755.7 L752.5,761.5 L754.0,767.3 L755.5,773.2 L757.0,779.1 L758.5,785.0 L760.0,790.9 L761.5,796.9 L763.0,802.9 L764.5,809.3 L766.0,815.8 L767.5,822.1 L769.0,827.6 L770.5,832.3 L772.0,836.1 L773.5,839.4 L775.0,842.0 L776.5,843.8 L778.0,844.4 L779.5,844.5 L781.0,844.5 L782.5,844.5 L784.0,844.5 L785.5,844.5 L787.0,844.5 L788.5,844.5 L790.0,844.5 L791.5,844.5 L793.0,844.5 L794.5,844.5 L796.0,844.5 L797.5,844.5 L799.0,844.5 L800.5,844.5 L802.0,844.5 L803.5,844.5 L805.0,844.5 L806.5,844.5 L808.0,844.5 L809.5,844.5 L811.0,844.5 L812.5,844.5 L814.0,844.5 L815.5,844.5 L817.0,844.5 L818.5,844.5 L820.0,844.5 L821.5,844.4 L823.0,843.6 L824.5,841.9 L826.0,839.4 L827.5,836.3 L829.0,832.7 L830.5,828.7 L832.0,824.2 L833.5,819.3 L835.0,813.8 L836.5,807.3 L838.0,799.8 L839.5,791.7 L841.0,783.6 L842.5,775.6 L844.0,767.7 L845.5,759.8 L847.0,752.2 L848.5,745.3 L850.0,739.5 L851.5,734.3 L853.0,730.0 L854.5,726.7 L856.0,724.1 L857.5,721.8 L859.0,719.7 L860.5,718.1 L862.0,717.0 L863.5,716.7 L865.0,717.1 L866.5,717.8 L868.0,718.9 L869.5,720.2 L871.0,721.7 L872.5,723.4 L874.0,725.2 L875.5,727.2 L877.0,729.3 L878.5,731.6 L880.0,734.1 L881.5,736.8 L883.0,739.7 L884.5,742.7 L886.0,745.8 L887.5,748.8 L889.0,751.9 L890.5,755.1 L892.0,758.3 L893.5,761.7 L895.0,765.0 L896.5,768.3 L898.0,771.4 L899.5,774.5 L901.0,777.4 L902.5,780.3 L904.0,783.1 L905.5,785.9 L907.0,788.6 L908.5,791.3 L910.0,794.0 L911.5,796.6 L913.0,799.2 L914.5,801.8 L916.0,804.4 L917.5,806.9 L919.0,809.4 L920.5,811.8 L922.0,814.0 L923.5,816.2 L925.0,818.3 L926.5,820.3 L928.0,822.2 L929.5,824.1 L931.0,825.8 L932.5,827.5 L934.0,829.0 L935.5,830.4 L937.0,831.8 L938.5,833.2 L940.0,834.4 L941.5,835.5 L943.0,836.5 L944.5,837.3 L946.0,837.8 L947.5,838.1 L949.0,838.0 L950.5,837.5 L952.0,836.8 L953.5,835.9 L955.0,834.7 L956.5,833.5 L958.0,832.1 L959.5,830.6 L961.0,829.0 L962.5,827.0 L964.0,824.3 L965.5,821.2 L967.0,817.6 L968.5,813.8 L970.0,809.9 L971.5,805.9 L973.0,801.5 L974.5,796.8 L976.0,791.7 L977.5,786.4 L979.0,781.0 L980.5,775.2 L982.0,769.0 L983.5,762.8 L985.0,757.0 L986.5,751.8 L988.0,747.2 L989.5,742.8 L991.0,738.6 L992.5,734.5 L994.0,730.4 L995.5,726.6 L997.0,723.5 L998.5,721.3 L1000.0,719.6 L1001.5,718.3 L1003.0,717.5 L1004.5,717.3 L1006.0,717.6 L1007.5,718.3 L1009.0,719.3 L1010.5,720.6 L1012.0,722.1 L1013.5,723.8 L1015.0,725.6 L1016.5,727.6 L1018.0,729.8 L1019.5,732.5 L1021.0,735.4 L1022.5,738.6 L1024.0,742.1 L1025.5,745.7 L1027.0,749.3 L1028.5,753.0 L1030.0,756.7 L1031.5,760.5 L1033.0,764.6 L1034.5,768.8 L1036.0,773.2 L1037.5,777.7 L1039.0,782.3 L1040.5,786.8 L1042.0,791.3 L1043.5,795.6 L1045.0,799.8 L1046.5,803.8 L1048.0,807.5 L1049.5,810.9 L1051.0,814.0 L1052.5,817.1 L1054.0,820.0 L1055.5,822.9 L1057.0,825.7 L1058.5,828.4 L1060.0,830.9 L1061.5,833.3 L1063.0,835.6 L1064.5,837.6 L1066.0,839.5 L1067.5,841.2 L1069.0,842.6 L1070.5,843.8 L1072.0,844.4 L1073.5,844.5 L1075.0,844.5 L1076.5,844.5 L1078.0,844.5 L1079.5,844.5 L1081.0,844.5 L1082.5,844.5 L1084.0,844.5 L1085.5,844.5 L1087.0,844.5 L1088.5,844.5 L1090.0,844.5 L1091.5,844.5 L1093.0,844.5 L1094.5,844.5 L1096.0,844.5 L1097.5,844.5 L1099.0,844.5 L1100.5,844.5 L1102.0,844.5 L1103.5,844.5 L1105.0,844.5 L1106.5,844.5 L1108.0,844.5 L1109.5,844.5 L1111.0,844.5 L1112.5,844.5 L1114.0,844.5 L1115.5,844.3 L1117.0,843.4 L1118.5,841.8 L1120.0,839.6 L1121.5,837.1 L1123.0,834.4 L1124.5,831.6 L1126.0,828.7 L1127.5,825.4 L1129.0,821.2 L1130.5,816.0 L1132.0,809.2 L1133.5,799.5 L1135.0,787.6 L1136.5,775.6 L1138.0,764.5 L1139.5,753.9 L1141.0,744.7 L1142.5,737.4 L1144.0,731.5 L1145.5,727.1 L1147.0,724.3 L1148.5,722.3 L1150.0,720.7 L1151.5,719.2 L1153.0,718.1 L1154.5,717.3 L1156.0,716.8 L1157.5,716.7 L1159.0,717.2 L1160.5,718.1 L1162.0,719.6 L1163.5,721.4 L1165.0,723.7 L1166.5,726.3 L1168.0,729.3 L1169.5,733.4 L1171.0,740.0 L1172.5,748.3 L1174.0,757.2 L1175.5,766.4 L1177.0,776.0 L1178.5,785.6 L1180.0,795.5 L1181.5,805.2 L1183.0,813.7 L1184.5,820.5 L1186.0,826.2 L1187.5,831.1 L1189.0,835.1 L1190.5,838.2 L1192.0,840.5 L1193.5,842.3 L1195.0,843.7 L1196.5,844.4 L1198.0,844.5 L1199.5,844.5 L1201.0,844.5 L1202.5,844.5 L1204.0,844.5 L1205.5,844.5 L1207.0,844.5 L1208.5,844.5 L1210.0,844.5 L1211.5,844.5 L1213.0,844.5 L1214.5,844.5 L1216.0,844.5 L1217.5,844.5 L1219.0,844.5 L1220.5,844.5 L1222.0,844.5 L1223.5,844.5 L1225.0,844.5 L1226.5,844.5 L1228.0,844.5 L1229.5,844.5 L1231.0,844.5 L1232.5,844.5 L1234.0,844.5 L1235.5,844.5 L1237.0,844.5 L1238.5,844.5 L1240.0,844.5 L1241.5,844.4 L1243.0,843.6 L1244.5,841.6 L1246.0,838.4 L1247.5,834.2 L1249.0,829.2 L1250.5,823.6 L1252.0,817.5 L1253.5,810.6 L1255.0,801.3 L1256.5,789.1 L1258.0,775.0 L1259.5,760.0 L1261.0,743.9 L1262.5,726.3 L1264.0,708.0 L1265.5,690.7 L1267.0,675.2 L1268.5,661.2 L1270.0,648.2 L1271.5,636.2 L1273.0,625.1 L1274.5,614.6 L1276.0,605.3 L1277.5,598.2 L1279.0,593.6 L1280.5,590.5 L1282.0,589.3 L1283.5,590.2 L1285.0,592.9 L1286.5,597.0 L1288.0,602.2 L1289.5,608.2 L1291.0,614.9 L1292.5,622.0 L1294.0,629.7 L1295.5,638.3 L1297.0,647.6 L1298.5,657.5 L1300.0,667.4 L1301.5,677.1 L1303.0,686.7 L1304.5,696.2 L1306.0,705.8 L1307.5,715.3 L1309.0,724.5 L1310.5,733.3 L1312.0,741.7 L1313.5,749.8 L1315.0,757.6 L1316.5,765.1 L1318.0,772.2 L1319.5,778.9 L1321.0,785.4 L1322.5,791.8 L1324.0,797.8 L1325.5,803.4 L1327.0,808.4 L1328.5,812.5 L1330.0,816.1 L1331.5,819.5 L1333.0,822.7 L1334.5,825.8 L1336.0,828.6 L1337.5,831.2 L1339.0,833.4 L1340.5,835.2 L1342.0,836.6 L1343.5,837.5 L1345.0,838.1 L1346.5,838.5 L1348.0,838.7 L1349.5,838.8 L1351.0,838.7 L1352.5,838.4 L1354.0,838.0 L1355.5,837.3 L1357.0,836.5 L1358.5,835.6 L1360.0,834.4 L1361.5,833.1 L1363.0,831.6 L1364.5,829.9 L1366.0,828.0 L1367.5,825.9 L1369.0,823.6 L1370.5,821.0 L1372.0,818.0 L1373.5,814.6 L1375.0,810.9 L1376.5,807.0 L1378.0,802.8 L1379.5,798.4 L1381.0,793.9 L1382.5,789.4 L1384.0,784.9 L1385.5,780.4 L1387.0,776.0 L1388.5,771.8 L1390.0,767.8 L1391.5,764.0 L1393.0,760.2 L1394.5,756.5 L1396.0,752.6 L1397.5,748.7 L1399.0,744.9 L1400.5,741.0 L1402.0,737.3 L1403.5,733.8 L1405.0,730.4 L1406.5,727.3 L1408.0,724.5 L1409.5,722.0 L1411.0,719.9 L1412.5,718.2 L1414.0,717.0 L1415.5,716.5 L1417.0,717.0 L1418.5,718.5 L1420.0,720.9 L1421.5,724.1 L1423.0,728.0 L1424.5,732.5 L1426.0,737.5 L1427.5,742.9 L1429.0,748.5 L1430.5,754.3 L1432.0,760.1 L1433.5,765.8 L1435.0,771.6 L1436.5,778.2 L1438.0,785.8 L1439.5,794.1 L1441.0,802.8 L1442.5,811.3 L1444.0,819.3 L1445.5,826.3 L1447.0,831.9 L1448.5,836.1 L1450.0,839.4 L1451.5,841.9 L1453.0,843.6 L1454.5,844.3 L1456.0,844.5 L1456.5,844.5 Z" fill="#1da1f2"/></svg>
<div class="b" style="left:711px;top:941.5px;width:16.5px;height:17px;background:#1da1f2;border-radius:4px"></div>
<div class="b" style="left:831px;top:941.5px;width:16.5px;height:17px;background:#2278ea;border-radius:4px"></div>
<div class="b" style="left:971px;top:941.5px;width:16.5px;height:17px;background:#e3405f;border-radius:4px"></div>
<div class="b" style="left:1112.5px;top:941.5px;width:16.5px;height:17px;background:#0077b5;border-radius:4px"></div>
<div class="b" style="left:478.5px;top:1003px;width:977px;height:300px;background:#fff;border:1px solid #dee1e1;border-radius:10px;box-sizing:border-box"></div>
<div class="b" style="left:512px;top:1066.5px;width:596.5px;height:1.5px;background:#c8cccc"></div>
<div class="b" style="left:512px;top:1131.5px;width:596.5px;height:3.5px;background:#929a9b"></div>
<div class="b" style="left:512px;top:1195.5px;width:596.5px;height:1.5px;background:#c8cccc"></div>
<div class="t" style="left:1229px;top:1197px;font-size:62px;line-height:62px;font-weight:700;color:#0fc1b0;letter-spacing:4px">3.6%</div>
<div class="b" style="left:111px;top:410px;width:289px;height:44px;background:#515e5f;border-radius:8px"></div>
<div class="b" style="left:124px;top:367px;width:208px;height:3px;background:#2f87d8;border-radius:1px"></div>
<svg class="b" style="left:371px;top:186px" width="14" height="8" viewBox="0 0 14 8"><path d="M1,1 L7.0,7 L13,1" fill="none" stroke="#fff" stroke-width="2" stroke-linecap="round" stroke-linejoin="round"/></svg>
<svg class="b" style="left:371px;top:242px" width="14" height="8" viewBox="0 0 14 8"><path d="M1,1 L7.0,7 L13,1" fill="none" stroke="#fff" stroke-width="2" stroke-linecap="round" stroke-linejoin="round"/></svg>
<svg class="b" style="left:371px;top:298px" width="14" height="8" viewBox="0 0 14 8"><path d="M1,1 L7.0,7 L13,1" fill="none" stroke="#fff" stroke-width="2" stroke-linecap="round" stroke-linejoin="round"/></svg>
<svg class="b" style="left:371px;top:706px" width="14" height="8" viewBox="0 0 14 8"><path d="M1,1 L7.0,7 L13,1" fill="none" stroke="#fff" stroke-width="2" stroke-linecap="round" stroke-linejoin="round"/></svg>
<svg class="b" style="left:371px;top:762px" width="14" height="8" viewBox="0 0 14 8"><path d="M1,1 L7.0,7 L13,1" fill="none" stroke="#fff" stroke-width="2" stroke-linecap="round" stroke-linejoin="round"/></svg>
<svg class="b" style="left:371px;top:817px" width="14" height="8" viewBox="0 0 14 8"><path d="M1,1 L7.0,7 L13,1" fill="none" stroke="#fff" stroke-width="2" stroke-linecap="round" stroke-linejoin="round"/></svg>
<svg class="b" style="left:371px;top:873px" width="14" height="8" viewBox="0 0 14 8"><path d="M1,1 L7.0,7 L13,1" fill="none" stroke="#fff" stroke-width="2" stroke-linecap="round" stroke-linejoin="round"/></svg>
<svg class="b" style="left:371px;top:928px" width="14" height="8" viewBox="0 0 14 8"><path d="M1,1 L7.0,7 L13,1" fill="none" stroke="#fff" stroke-width="2" stroke-linecap="round" stroke-linejoin="round"/></svg>
<svg class="b" style="left:371px;top:981px" width="14" height="8" viewBox="0 0 14 8"><path d="M1,1 L7.0,7 L13,1" fill="none" stroke="#fff" stroke-width="2" stroke-linecap="round" stroke-linejoin="round"/></svg>
<svg class="b" style="left:371px;top:350px" width="14" height="8" viewBox="0 0 14 8"><path d="M1,7 L7.0,1 L13,7" fill="none" stroke="#fff" stroke-width="2" stroke-linecap="round" stroke-linejoin="round"/></svg>
<svg class="b" style="left:1865px;top:203px" width="14" height="8" viewBox="0 0 14 8"><path d="M1,1 L7.0,7 L13,1" fill="none" stroke="#364141" stroke-width="2" stroke-linecap="round" stroke-linejoin="round"/></svg>
<svg class="b" style="left:1865px;top:259px" width="14" height="8" viewBox="0 0 14 8"><path d="M1,1 L7.0,7 L13,1" fill="none" stroke="#364141" stroke-width="2" stroke-linecap="round" stroke-linejoin="round"/></svg>
<svg class="b" style="left:1865px;top:314px" width="14" height="8" viewBox="0 0 14 8"><path d="M1,1 L7.0,7 L13,1" fill="none" stroke="#364141" stroke-width="2" stroke-linecap="round" stroke-linejoin="round"/></svg>
<svg class="b" style="left:1865px;top:370px" width="14" height="8" viewBox="0 0 14 8"><path d="M1,1 L7.0,7 L13,1" fill="none" stroke="#364141" stroke-width="2" stroke-linecap="round" stroke-linejoin="round"/></svg>
<svg class="b" style="left:26px;top:22px" width="38" height="45" viewBox="0 0 38 45"><path d="M2,43 L2,19 Q2,1.5 17,1.5 L36,1.5 L36,21.5 Q36,35.5 22,35.5 L10,35.5 Z" fill="#59cb59"/><path d="M2,36 L2,19 Q2,1.5 17,1.5 L16,1.5 L16,21.5 Z" fill="#0fa84a"/><path d="M15.8,21.7 L36,1.5 L36,21.7 Z" fill="#75dd69"/><path d="M3.5,35.5 L10,35.5 L8,37.5 Z" fill="#0fa84a"/></svg>
<div class="b" style="left:22px;top:111px;width:44.5px;height:44.5px;background:#364141;border-radius:9px"></div>
<svg class="b" style="left:33px;top:124px" width="23" height="18" viewBox="0 0 23 18"><path d="M1.5,2 Q1.5,1 2.5,1 L10,1 L13,4 L21,4 Q22,4 22,5 L22,16.5 Q22,17.5 21,17.5 L2.5,17.5 Q1.5,17.5 1.5,16.5 Z" fill="#2079c3"/></svg>
<svg class="b" style="left:31px;top:200px" width="27" height="23" viewBox="0 0 27 23"><path d="M1.5,19 Q1,20.5 2.5,20.5 L24.5,20.5 Q26,20.5 25.5,19 A12.5,12.5 0 1 0 1.5,19 Z" fill="#fff"/><circle cx="13.5" cy="16.5" r="3" fill="#273333"/><path d="M13,16 L16.5,5.5" stroke="#273333" stroke-width="1.8" stroke-linecap="round"/></svg>
<svg class="b" style="left:31px;top:268px" width="27" height="20" viewBox="0 0 27 20"><path d="M7,1.5 L20,1.5 Q21,1.5 21.7,2.3 L25.5,7.5 Q26,8.2 26,9 L26,16.5 Q26,18 24.5,18 L2.5,18 Q1,18 1,16.5 L1,9 Q1,8.2 1.5,7.5 L5.3,2.3 Q6,1.5 7,1.5 Z" fill="#fff"/><path d="M7.5,4 L19.5,4 L22.5,8.5 L17.5,8.5 L16,11 L11,11 L9.5,8.5 L4.5,8.5 Z" fill="#273333"/></svg>
<svg class="b" style="left:35px;top:332px" width="19" height="25" viewBox="0 0 19 25"><path d="M3,1.5 L16,1.5 L16,4 L13.5,4 L13.5,9 Q17,11 17.5,15.5 L11,15.5 L10,23.5 L9,23.5 L8,15.5 L1.5,15.5 Q2,11 5.5,9 L5.5,4 L3,4 Z" fill="#fff"/></svg>
<svg class="b" style="left:32px;top:402px" width="24" height="20" viewBox="0 0 24 20"><rect x="1.5" y="1" width="4" height="4" rx="0.8" fill="#fff"/><rect x="1.5" y="8" width="4" height="4" rx="0.8" fill="#fff"/><rect x="1.5" y="15" width="4" height="4" rx="0.8" fill="#fff"/><rect x="7" y="1.5" width="16" height="3.2" rx="1.2" fill="#fff"/><rect x="7" y="8.5" width="16" height="3.2" rx="1.2" fill="#fff"/><rect x="7" y="15.5" width="16" height="3.2" rx="1.2" fill="#fff"/></svg>
<svg class="b" style="left:32px;top:465px" width="25" height="26" viewBox="0 0 25 26"><path d="M24,1.5 L1,13 L7,15.5 Z" fill="#fff"/><path d="M24,1.5 L8.5,16.5 L8.5,24 L12.5,20 L19.5,22.5 Z" fill="#fff"/></svg>
<svg class="b" style="left:34px;top:533px" width="23" height="24" viewBox="0 0 23 24"><rect x="1.5" y="4" width="2.6" height="14" rx="1.3" fill="#fff"/><rect x="7" y="7" width="2.6" height="8" rx="1.3" fill="#fff"/><rect x="12" y="1" width="2.8" height="22" rx="1.4" fill="#fff"/><rect x="17.5" y="4" width="2.6" height="14" rx="1.3" fill="#fff"/></svg>
<div class="b" style="left:11.4px;top:578px;width:66px;height:66px;background:#515e5f;border-radius:50%"></div>
<svg class="b" style="left:33px;top:603px" width="23" height="16" viewBox="0 0 23 16"><rect x="0.5" y="6" width="5.2" height="8.5" rx="1" fill="#fff"/><rect x="8.8" y="3" width="5.2" height="11.5" rx="1" fill="#fff"/><rect x="17" y="0.5" width="5.2" height="14" rx="1" fill="#fff"/></svg>
<svg class="b" style="left:32px;top:666px" width="25" height="25" viewBox="0 0 25 25"><circle cx="12.5" cy="3" r="1.8" fill="none" stroke="#fff" stroke-width="1.2"/><rect x="12" y="4.5" width="1" height="3" fill="#fff"/><rect x="2.5" y="7" width="20" height="16" rx="2" fill="#fff"/><rect x="0.5" y="11" width="2.5" height="7" rx="1" fill="#fff"/><rect x="22" y="11" width="2.5" height="7" rx="1" fill="#fff"/><path d="M6.5,13 Q8.5,10.5 10.5,13" stroke="#273333" stroke-width="1.4" fill="none"/><path d="M14.5,13 Q16.5,10.5 18.5,13" stroke="#273333" stroke-width="1.4" fill="none"/><path d="M9.5,15.5 L15.5,15.5 Q15,19.5 12.5,19.5 Q10,19.5 9.5,15.5 Z" fill="#273333"/></svg>
<svg class="b" style="left:32px;top:733px" width="26" height="25" viewBox="0 0 26 25"><path d="M13,1.5 L16.3,8.7 L24.5,9.5 L18.3,15 L20.1,23 L13,18.8 L5.9,23 L7.7,15 L1.5,9.5 L9.7,8.7 Z" fill="none" stroke="#fff" stroke-width="2" stroke-linejoin="round"/><path d="M13,1.5 L13,18.8 L5.9,23 L7.7,15 L1.5,9.5 L9.7,8.7 Z" fill="#fff"/></svg>
<svg class="b" style="left:22px;top:1151px" width="45" height="45" viewBox="0 0 45 45"><defs><clipPath id="av"><path d="M0,45 L0,20 Q0,0 20,0 L45,0 L45,25 Q45,45 25,45 Z"/></clipPath></defs><g clip-path="url(#av)"><rect width="45" height="45" fill="#08c4b2"/><path d="M4,45 Q5,31 15,28 L21,25.5 L28,26.5 Q38,30 43,35 Q46,40 45,45 Z" fill="#5f5b62"/><path d="M18.5,26 L21.5,30.5 L25.5,26.5 L24,23 L19,23 Z" fill="#d7a08e"/><path d="M19.5,28 L21,31.5 L22.5,28.5 Z" fill="#2d2a2e"/><ellipse cx="21.5" cy="14" rx="7.2" ry="10.5" fill="#dfa593"/><path d="M14.3,13 Q14.5,2.5 21.5,2.5 Q28.5,2.5 28.7,13 Q27.5,6.5 21.5,6 Q15.5,6.5 14.3,13 Z" fill="#4a3226"/><path d="M14.5,15 Q14.5,24.5 21.5,25 Q28.5,24.5 28.5,15 L27.5,18.5 Q25.5,22 21.5,22 Q17.5,22 15.5,18.5 Z" fill="#9a5f43"/><path d="M18,20 Q21.5,22 25,20" stroke="#f4d2c8" stroke-width="1.2" fill="none"/><rect x="15" y="12" width="5.5" height="3.2" rx="1.2" fill="none" stroke="#3a3536" stroke-width="1"/><rect x="22.5" y="12" width="5.5" height="3.2" rx="1.2" fill="none" stroke="#3a3536" stroke-width="1"/></g></svg>
<div class="b" style="left:1175px;top:23px;width:383px;height:43px;border:1.5px solid #364141;border-radius:7px;box-sizing:border-box"></div>
<svg class="b" style="left:1192px;top:32px" width="22" height="24" viewBox="0 0 22 24"><rect x="1" y="4" width="19.1" height="19" rx="2" fill="#364141"/><rect x="5.2" y="1.2" width="2.6" height="4" rx="1.2" fill="#364141"/><rect x="13.7" y="1.2" width="2.6" height="4" rx="1.2" fill="#364141"/><rect x="1" y="7.9" width="19.1" height="2.2" fill="#c8cccc"/><rect x="12" y="12.4" width="7" height="1.6" fill="#e4e7e7"/><rect x="2.5" y="15" width="16.5" height="2" fill="#c8cccc"/><rect x="2.5" y="18" width="6.6" height="1.6" fill="#e4e7e7"/></svg>
<div class="b" style="left:1568px;top:23px;width:55.5px;height:43px;border:1.5px solid #364141;border-radius:7px;box-sizing:border-box"></div>
<svg class="b" style="left:1583px;top:40px" width="25" height="10" viewBox="0 0 25 10"><circle cx="4.8" cy="4.8" r="3.4" fill="#364141"/><circle cx="12.5" cy="4.8" r="3.4" fill="#364141"/><circle cx="20.2" cy="4.8" r="3.4" fill="#364141"/></svg>
<div class="b" style="left:1635px;top:23px;width:122px;height:43px;border:1.5px solid #364141;border-radius:7px;box-sizing:border-box"></div>
<svg class="b" style="left:1652px;top:31px" width="22" height="26" viewBox="0 0 22 26"><path d="M6,11.8 L3.5,11.8 Q1.8,11.8 1.8,13.5 L1.8,21.6 Q1.8,23.3 3.5,23.3 L17.5,23.3 Q19.2,23.3 19.2,21.6 L19.2,13.5 Q19.2,11.8 17.5,11.8 L15,11.8" fill="none" stroke="#364141" stroke-width="1.8" stroke-linejoin="round" stroke-linecap="round"/><path d="M10.5,18.5 L10.5,2 M5.6,6.9 L10.5,2 L15.4,6.9" fill="none" stroke="#364141" stroke-width="1.8" stroke-linecap="round" stroke-linejoin="round"/></svg>
<div class="b" style="left:1770px;top:23px;width:118.5px;height:43px;background:#364141;border-radius:7px"></div>
<svg class="b" style="left:1787px;top:35.6px" width="22" height="19" viewBox="0 0 22 19"><path d="M2.4,9 L13.6,9 M8.4,3.8 L13.6,9 L8.4,14.2" fill="none" stroke="#fff" stroke-width="3" stroke-linecap="round" stroke-linejoin="round"/><rect x="16.9" y="0.6" width="3" height="16.8" rx="1.4" fill="#fff"/></svg>
<div class="b" style="left:1922.3px;top:11px;width:66.6px;height:66.6px;background:#2079c3;border-radius:50%"></div>
<svg class="b" style="left:1943px;top:31px" width="26" height="26" viewBox="0 0 26 26"><path d="M12,4.5 L4.5,4.5 Q2.5,4.5 2.5,6.5 L2.5,21.5 Q2.5,23.5 4.5,23.5 L18.5,23.5 Q20.5,23.5 20.5,21.5 L20.5,14" fill="none" stroke="#fff" stroke-width="2.4"/><path d="M8.5,17.5 L10,12.5 L21,1.8 Q22,1 23,2 L24,3 Q25,4 24.2,5 L13.3,15.8 Z" fill="#fff"/><path d="M19.5,3.3 L22.6,6.4" stroke="#2079c3" stroke-width="1.2"/></svg>
<svg class="b" style="left:1942px;top:108px" width="28" height="28" viewBox="0 0 28 28"><path d="M14,3 Q6.8,3.5 6.3,10.5 L6,16 Q5.5,19.5 2,21.5 Q1,22.5 2.2,23 L25.8,23 Q27,22.5 26,21.5 Q22.5,19.5 22,16 L21.7,10.5 Q21.2,3.5 14,3 Z" fill="#364141"/><rect x="12.8" y="1.5" width="2.4" height="3" rx="1" fill="#364141"/><path d="M11,25 L17,25 Q16,27.5 14,27.5 Q12,27.5 11,25 Z" fill="#364141"/></svg>
<div class="b" style="left:1962.7px;top:104px;width:11px;height:11px;background:#2079c3;border-radius:50%"></div>
<svg class="b" style="left:1944px;top:177px" width="23" height="23" viewBox="0 0 23 23"><circle cx="11.4" cy="11.4" r="10.6" fill="#364141"/><path d="M7.8,8.8 Q7.8,5 11.5,5 Q15.2,5 15.2,8.3 Q15.2,10.5 13,11.5 Q12,12 12,13.5" fill="none" stroke="#fff" stroke-width="2.6" stroke-linecap="round"/><circle cx="12" cy="17" r="1.7" fill="#fff"/></svg>
<svg class="b" style="left:1538px;top:199.5px" width="24" height="22" viewBox="0 0 24 22"><path d="M23,3.2 Q21.9,3.7 20.6,3.8 Q22,3 22.5,1.5 Q21.2,2.3 19.8,2.6 Q18.5,1.2 16.6,1.2 Q12.2,1.3 12.3,5.6 Q12.3,6.1 12.4,6.6 Q6.4,6.3 2.5,1.7 Q1.8,2.9 1.8,4.2 Q1.8,6.6 3.8,7.9 Q2.7,7.9 1.8,7.4 Q1.8,10.8 5.1,11.5 Q4.1,11.8 3.1,11.6 Q4,14.4 7.1,14.6 Q4.1,16.9 0.8,16.5 Q4,18.6 7.8,18.6 Q20.3,18.4 20.6,5.8 L20.6,5.3 Q21.9,4.4 23,3.2 Z" fill="#1da1f2"/></svg>
<svg class="b" style="left:1538px;top:252px" width="24" height="24" viewBox="0 0 24 24"><circle cx="12" cy="12" r="11" fill="#1877f2"/><path d="M13.4,23 L13.4,15 L16.2,15 L16.6,11.8 L13.4,11.8 L13.4,9.8 Q13.4,8.4 14.9,8.4 L16.7,8.4 L16.7,5.6 Q15.6,5.4 14.5,5.4 Q10.2,5.4 10.2,9.6 L10.2,11.8 L7.3,11.8 L7.3,15 L10.2,15 L10.2,23 Z" fill="#fff"/></svg>
<svg class="b" style="left:1539px;top:308px" width="22" height="22" viewBox="0 0 22 22"><rect x="2.2" y="2.2" width="17.6" height="17.6" rx="5" fill="none" stroke="#e3405f" stroke-width="2"/><circle cx="11" cy="11" r="4.2" fill="none" stroke="#e3405f" stroke-width="2"/><circle cx="16" cy="6" r="1.1" fill="#e3405f"/></svg>
<svg class="b" style="left:1539px;top:364px" width="22" height="22" viewBox="0 0 22 22"><rect x="1.5" y="1.5" width="19" height="19" rx="1.5" fill="#0b76b4"/><rect x="4.5" y="8.5" width="2.8" height="9" fill="#fff"/><circle cx="5.9" cy="5.5" r="1.7" fill="#fff"/><path d="M9.5,8.5 L12.2,8.5 L12.2,9.8 Q13.2,8.2 15.2,8.2 Q18,8.2 18,11.8 L18,17.5 L15.2,17.5 L15.2,12.3 Q15.2,10.6 13.9,10.6 Q12.3,10.6 12.3,12.4 L12.3,17.5 L9.5,17.5 Z" fill="#fff"/></svg>
<svg class="b" style="left:481px;top:292px" width="28" height="19" viewBox="0 0 28 19"><path d="M1,9.4 Q6.5,1 13.5,1 Q20.5,1 26,9.4 Q20.5,18 13.5,18 Q6.5,18 1,9.4 Z" fill="#0bc2b1"/><circle cx="13.5" cy="9.4" r="6.4" fill="#fff"/><circle cx="13.5" cy="9.4" r="4.6" fill="#0bc2b1"/><circle cx="13.5" cy="9.4" r="4.4" fill="#0bc2b1"/><circle cx="10.6" cy="7.2" r="2" fill="#fff"/></svg>
<svg class="b" style="left:824px;top:290px" width="28" height="23" viewBox="0 0 28 23"><path d="M10,1.8 Q19,1.8 19,8.6 Q19,15.4 10,15.4 Q8.5,15.4 7.2,15.1 Q4.5,16.5 1.2,16.5 Q3.5,15 4,13.2 Q1,11.5 1,8.6 Q1,1.8 10,1.8 Z" fill="#6f5ed3"/><path d="M20.5,8 Q26,10 26,15 Q26,17.5 24.3,19 Q24.8,20.5 26.3,21.3 Q23.5,21.5 21.5,20.3 Q20.3,20.6 18.5,20.6 Q12,20.6 9.5,17.3 Q20,17 20.5,8 Z" fill="#6f5ed3"/></svg>
<svg class="b" style="left:1168px;top:289px" width="19" height="25" viewBox="0 0 19 25"><path d="M2.5,1.5 L16.5,13 L10.5,13.5 L13.5,20.5 L10.8,21.8 L7.8,14.8 L2.5,19 Z" fill="#d6305e" stroke="#d6305e" stroke-width="1" stroke-linejoin="round"/></svg>
<svg class="b" style="left:1045px;top:1095px" width="16" height="16" viewBox="0 0 16 16"><path d="M2.2,13.9 L14,2.1 M6.6,1.9 L14.3,1.9 L14.3,9" fill="none" stroke="#0fc1b0" stroke-width="1.9" stroke-linecap="round" stroke-linejoin="round"/></svg>
<div class="b" style="left:422px;top:1217px;width:1578px;height:1px;background:#dee1e1"></div>
<div class="t" style="left:122.60px;top:21.78px;font-size:16.23px;line-height:16px;font-weight:400;color:#b5baba;letter-spacing:-0.051px;">Sprout Coffee Co.</div>
<div class="t" style="left:122.20px;top:47.97px;font-size:22.03px;line-height:22px;font-weight:400;color:#ffffff;letter-spacing:1.720px;-webkit-text-stroke:0.7px #ffffff;">Reports</div>
<div class="t" style="left:123.10px;top:126.07px;font-size:18.84px;line-height:19px;font-weight:400;color:#ffffff;letter-spacing:0.499px;-webkit-text-stroke:0.55px #ffffff;">Reports Home</div>
<div class="t" style="left:124.50px;top:181.87px;font-size:18.84px;line-height:19px;font-weight:400;color:#ffffff;letter-spacing:0.520px;-webkit-text-stroke:0.55px #ffffff;">Your Reports</div>
<div class="t" style="left:123.00px;top:236.97px;font-size:18.84px;line-height:19px;font-weight:400;color:#ffffff;letter-spacing:0.617px;-webkit-text-stroke:0.55px #ffffff;">Internal Reports</div>
<div class="t" style="left:123.00px;top:292.77px;font-size:18.84px;line-height:19px;font-weight:400;color:#ffffff;letter-spacing:0.387px;-webkit-text-stroke:0.55px #ffffff;">Paid Social Reports</div>
<div class="t" style="left:124.00px;top:344.97px;font-size:18.84px;line-height:19px;font-weight:400;color:#ffffff;letter-spacing:0.504px;-webkit-text-stroke:0.55px #ffffff;">Cross-Channel Reports</div>
<div class="t" style="left:124.50px;top:422.97px;font-size:18.84px;line-height:19px;font-weight:400;color:#ffffff;letter-spacing:0.224px;-webkit-text-stroke:0.55px #ffffff;">Group Report</div>
<div class="t" style="left:124.50px;top:700.77px;font-size:18.84px;line-height:19px;font-weight:400;color:#ffffff;letter-spacing:0.772px;-webkit-text-stroke:0.55px #ffffff;">Twitter Reports</div>
<div class="t" style="left:123.30px;top:756.97px;font-size:18.84px;line-height:19px;font-weight:400;color:#ffffff;letter-spacing:0.438px;-webkit-text-stroke:0.55px #ffffff;">Facebook Reports</div>
<div class="t" style="left:123.30px;top:811.67px;font-size:18.84px;line-height:19px;font-weight:400;color:#ffffff;letter-spacing:0.571px;-webkit-text-stroke:0.55px #ffffff;">Instagram Reports</div>
<div class="t" style="left:123.30px;top:867.47px;font-size:18.84px;line-height:19px;font-weight:400;color:#ffffff;letter-spacing:0.498px;-webkit-text-stroke:0.55px #ffffff;">LinkedIn Reports</div>
<div class="t" style="left:123.00px;top:922.87px;font-size:18.84px;line-height:19px;font-weight:400;color:#ffffff;letter-spacing:0.658px;-webkit-text-stroke:0.55px #ffffff;">Pinterest Performance</div>
<div class="t" style="left:124.00px;top:975.57px;font-size:18.84px;line-height:19px;font-weight:400;color:#ffffff;letter-spacing:0.575px;-webkit-text-stroke:0.55px #ffffff;">Advocacy Reports</div>
<div class="t" style="left:124.20px;top:1028.47px;font-size:18.84px;line-height:19px;font-weight:400;color:#ffffff;letter-spacing:0.496px;-webkit-text-stroke:0.55px #ffffff;">Customize Branding</div>
<div class="t" style="left:124.50px;top:478.77px;font-size:18.84px;line-height:19px;font-weight:400;color:#f3f4f4;letter-spacing:-0.126px;">Sent Message</div>
<div class="t" style="left:123.50px;top:507.67px;font-size:18.84px;line-height:19px;font-weight:400;color:#f3f4f4;letter-spacing:0.119px;">Performance</div>
<div class="t" style="left:124.50px;top:568.47px;font-size:18.84px;line-height:19px;font-weight:400;color:#f3f4f4;letter-spacing:-0.019px;">Tag Report</div>
<div class="t" style="left:124.50px;top:622.97px;font-size:18.84px;line-height:19px;font-weight:400;color:#f3f4f4;letter-spacing:0.075px;">Google Analytics</div>
<div class="t" style="left:450.20px;top:30.86px;font-size:25.8px;line-height:26px;font-weight:400;color:#273333;letter-spacing:0.698px;-webkit-text-stroke:0.8px #273333;">Group Report</div>
<div class="t" style="left:1224.60px;top:37.47px;font-size:18.26px;line-height:18px;font-weight:400;color:#273333;letter-spacing:0.278px;-webkit-text-stroke:0.55px #273333;">12/1/19 – 12/31/19</div>
<div class="t" style="left:1392.00px;top:39.28px;font-size:15.94px;line-height:16px;font-weight:400;color:#515e5f;transform:scaleX(0.9572);transform-origin:0.00px 0;">vs 11/1/19 – 11/30/19</div>
<div class="t" style="left:1684.50px;top:34.12px;font-size:18.99px;line-height:19px;font-weight:400;color:#273333;letter-spacing:0.441px;-webkit-text-stroke:0.55px #273333;">Export</div>
<div class="t" style="left:1818.40px;top:34.12px;font-size:18.99px;line-height:19px;font-weight:400;color:#ffffff;letter-spacing:0.702px;-webkit-text-stroke:0.55px #ffffff;">Filters</div>
<div class="t" style="left:1533.70px;top:127.27px;font-size:18.26px;line-height:18px;font-weight:400;color:#364141;letter-spacing:0.353px;">Report uses</div>
<div class="t" style="left:1641.90px;top:127.27px;font-size:18.26px;line-height:18px;font-weight:400;color:#2079c3;letter-spacing:1.138px;-webkit-text-stroke:0.55px #2079c3;">multiple</div>
<div class="t" style="left:1719.50px;top:127.27px;font-size:18.26px;line-height:18px;font-weight:400;color:#364141;letter-spacing:0.320px;">time zones</div>
<div class="t" style="left:1578.20px;top:199.17px;font-size:18.26px;line-height:18px;font-weight:400;color:#273333;letter-spacing:1.489px;-webkit-text-stroke:0.55px #273333;">Twitter</div>
<div class="t" style="left:1577.40px;top:255.97px;font-size:18.26px;line-height:18px;font-weight:400;color:#273333;letter-spacing:0.654px;-webkit-text-stroke:0.55px #273333;">Facebook</div>
<div class="t" style="left:1577.40px;top:310.97px;font-size:18.26px;line-height:18px;font-weight:400;color:#273333;letter-spacing:1.207px;-webkit-text-stroke:0.55px #273333;">Instagram</div>
<div class="t" style="left:1577.40px;top:366.97px;font-size:18.26px;line-height:18px;font-weight:400;color:#273333;letter-spacing:1.022px;-webkit-text-stroke:0.55px #273333;">LinkedIn</div>
<div class="t" style="left:478.30px;top:147.87px;font-size:22.32px;line-height:22px;font-weight:700;color:#273333;letter-spacing:0.477px;">Group Activity Overview</div>
<div class="t" style="left:477.30px;top:244.52px;font-size:17.54px;line-height:18px;font-weight:400;color:#515e5f;letter-spacing:0.766px;">Impressions</div>
<div class="t" style="left:819.60px;top:245.32px;font-size:17.54px;line-height:18px;font-weight:400;color:#515e5f;letter-spacing:0.778px;">Engagements</div>
<div class="t" style="left:1165.00px;top:245.32px;font-size:17.54px;line-height:18px;font-weight:400;color:#515e5f;letter-spacing:0.759px;">Link Clicks</div>
<div class="t" style="left:520.70px;top:284.20px;font-size:33.77px;line-height:34px;font-weight:400;color:#364141;transform:scaleX(1.1050);transform-origin:2.00px 0;-webkit-text-stroke:0.6px #364141;">1,832</div>
<div class="t" style="left:862.50px;top:284.20px;font-size:33.77px;line-height:34px;font-weight:400;color:#364141;transform:scaleX(1.1199);transform-origin:1.00px 0;-webkit-text-stroke:0.6px #364141;">533</div>
<div class="t" style="left:1194.50px;top:284.20px;font-size:33.77px;line-height:34px;font-weight:400;color:#364141;transform:scaleX(1.1606);transform-origin:1.00px 0;-webkit-text-stroke:0.6px #364141;">5,889</div>
<div class="t" style="left:479.60px;top:413.87px;font-size:22.32px;line-height:22px;font-weight:700;color:#273333;letter-spacing:0.440px;">Group Audience Growth</div>
<div class="t" style="left:478.20px;top:504.77px;font-size:17.97px;line-height:18px;font-weight:400;color:#515e5f;letter-spacing:0.358px;">Followers Gained, By Day</div>
<div class="t" style="left:479.50px;top:560.73px;font-size:15.22px;line-height:15px;font-weight:400;color:#6d7676;transform:scaleX(1.1419);transform-origin:0.00px 0;-webkit-text-stroke:0.4px #6d7676;">40</div>
<div class="t" style="left:479.50px;top:629.73px;font-size:15.22px;line-height:15px;font-weight:400;color:#6d7676;transform:scaleX(1.1419);transform-origin:0.00px 0;-webkit-text-stroke:0.4px #6d7676;">30</div>
<div class="t" style="left:479.50px;top:697.53px;font-size:15.22px;line-height:15px;font-weight:400;color:#6d7676;transform:scaleX(1.1419);transform-origin:0.00px 0;-webkit-text-stroke:0.4px #6d7676;">20</div>
<div class="t" style="left:478.50px;top:767.23px;font-size:15.22px;line-height:15px;font-weight:400;color:#6d7676;transform:scaleX(1.2157);transform-origin:1.00px 0;-webkit-text-stroke:0.4px #6d7676;">10</div>
<div class="t" style="left:479.50px;top:836.73px;font-size:15.22px;line-height:15px;font-weight:400;color:#6d7676;-webkit-text-stroke:0.4px #6d7676;">0</div>
<div class="t" style="left:521.90px;top:863.83px;font-size:15.22px;line-height:15px;font-weight:400;color:#6d7676;-webkit-text-stroke:0.4px #6d7676;">1</div>
<div class="t" style="left:553.14px;top:863.83px;font-size:15.22px;line-height:15px;font-weight:400;color:#6d7676;-webkit-text-stroke:0.4px #6d7676;">2</div>
<div class="t" style="left:583.88px;top:863.83px;font-size:15.22px;line-height:15px;font-weight:400;color:#6d7676;-webkit-text-stroke:0.4px #6d7676;">3</div>
<div class="t" style="left:614.12px;top:863.83px;font-size:15.22px;line-height:15px;font-weight:400;color:#6d7676;-webkit-text-stroke:0.4px #6d7676;">4</div>
<div class="t" style="left:645.36px;top:863.83px;font-size:15.22px;line-height:15px;font-weight:400;color:#6d7676;-webkit-text-stroke:0.4px #6d7676;">5</div>
<div class="t" style="left:676.10px;top:863.83px;font-size:15.22px;line-height:15px;font-weight:400;color:#6d7676;-webkit-text-stroke:0.4px #6d7676;">6</div>
<div class="t" style="left:706.84px;top:863.83px;font-size:15.22px;line-height:15px;font-weight:400;color:#6d7676;-webkit-text-stroke:0.4px #6d7676;">7</div>
<div class="t" style="left:737.58px;top:863.83px;font-size:15.22px;line-height:15px;font-weight:400;color:#6d7676;-webkit-text-stroke:0.4px #6d7676;">8</div>
<div class="t" style="left:768.32px;top:863.83px;font-size:15.22px;line-height:15px;font-weight:400;color:#6d7676;-webkit-text-stroke:0.4px #6d7676;">9</div>
<div class="t" style="left:793.06px;top:863.83px;font-size:15.22px;line-height:15px;font-weight:400;color:#6d7676;transform:scaleX(1.1640);transform-origin:1.00px 0;-webkit-text-stroke:0.4px #6d7676;">10</div>
<div class="t" style="left:823.80px;top:863.83px;font-size:15.22px;line-height:15px;font-weight:400;color:#6d7676;transform:scaleX(1.2557);transform-origin:1.00px 0;-webkit-text-stroke:0.4px #6d7676;">11</div>
<div class="t" style="left:854.54px;top:863.83px;font-size:15.22px;line-height:15px;font-weight:400;color:#6d7676;transform:scaleX(1.1640);transform-origin:1.00px 0;-webkit-text-stroke:0.4px #6d7676;">12</div>
<div class="t" style="left:885.28px;top:863.83px;font-size:15.22px;line-height:15px;font-weight:400;color:#6d7676;transform:scaleX(1.1640);transform-origin:1.00px 0;-webkit-text-stroke:0.4px #6d7676;">13</div>
<div class="t" style="left:916.02px;top:863.83px;font-size:15.22px;line-height:15px;font-weight:400;color:#6d7676;transform:scaleX(1.0933);transform-origin:1.00px 0;-webkit-text-stroke:0.4px #6d7676;">14</div>
<div class="t" style="left:946.76px;top:863.83px;font-size:15.22px;line-height:15px;font-weight:400;color:#6d7676;transform:scaleX(1.1640);transform-origin:1.00px 0;-webkit-text-stroke:0.4px #6d7676;">15</div>
<div class="t" style="left:977.50px;top:863.83px;font-size:15.22px;line-height:15px;font-weight:400;color:#6d7676;transform:scaleX(1.1640);transform-origin:1.00px 0;-webkit-text-stroke:0.4px #6d7676;">16</div>
<div class="t" style="left:1008.24px;top:863.83px;font-size:15.22px;line-height:15px;font-weight:400;color:#6d7676;transform:scaleX(1.1640);transform-origin:1.00px 0;-webkit-text-stroke:0.4px #6d7676;">17</div>
<div class="t" style="left:1038.98px;top:863.83px;font-size:15.22px;line-height:15px;font-weight:400;color:#6d7676;transform:scaleX(1.1640);transform-origin:1.00px 0;-webkit-text-stroke:0.4px #6d7676;">18</div>
<div class="t" style="left:1069.72px;top:863.83px;font-size:15.22px;line-height:15px;font-weight:400;color:#6d7676;transform:scaleX(1.1640);transform-origin:1.00px 0;-webkit-text-stroke:0.4px #6d7676;">19</div>
<div class="t" style="left:1101.46px;top:863.83px;font-size:15.22px;line-height:15px;font-weight:400;color:#6d7676;transform:scaleX(1.0933);transform-origin:0.00px 0;-webkit-text-stroke:0.4px #6d7676;">20</div>
<div class="t" style="left:1132.20px;top:863.83px;font-size:15.22px;line-height:15px;font-weight:400;color:#6d7676;transform:scaleX(1.0933);transform-origin:0.00px 0;-webkit-text-stroke:0.4px #6d7676;">21</div>
<div class="t" style="left:1162.94px;top:863.83px;font-size:15.22px;line-height:15px;font-weight:400;color:#6d7676;transform:scaleX(1.0933);transform-origin:0.00px 0;-webkit-text-stroke:0.4px #6d7676;">22</div>
<div class="t" style="left:1193.68px;top:863.83px;font-size:15.22px;line-height:15px;font-weight:400;color:#6d7676;transform:scaleX(1.0933);transform-origin:0.00px 0;-webkit-text-stroke:0.4px #6d7676;">23</div>
<div class="t" style="left:1224.42px;top:863.83px;font-size:15.22px;line-height:15px;font-weight:400;color:#6d7676;transform:scaleX(1.0307);transform-origin:0.00px 0;-webkit-text-stroke:0.4px #6d7676;">24</div>
<div class="t" style="left:1255.16px;top:863.83px;font-size:15.22px;line-height:15px;font-weight:400;color:#6d7676;transform:scaleX(1.0933);transform-origin:0.00px 0;-webkit-text-stroke:0.4px #6d7676;">25</div>
<div class="t" style="left:1285.90px;top:863.83px;font-size:15.22px;line-height:15px;font-weight:400;color:#6d7676;transform:scaleX(1.0933);transform-origin:0.00px 0;-webkit-text-stroke:0.4px #6d7676;">26</div>
<div class="t" style="left:1316.64px;top:863.83px;font-size:15.22px;line-height:15px;font-weight:400;color:#6d7676;transform:scaleX(1.0933);transform-origin:0.00px 0;-webkit-text-stroke:0.4px #6d7676;">27</div>
<div class="t" style="left:1347.38px;top:863.83px;font-size:15.22px;line-height:15px;font-weight:400;color:#6d7676;transform:scaleX(1.0933);transform-origin:0.00px 0;-webkit-text-stroke:0.4px #6d7676;">28</div>
<div class="t" style="left:1378.12px;top:863.83px;font-size:15.22px;line-height:15px;font-weight:400;color:#6d7676;transform:scaleX(1.0933);transform-origin:0.00px 0;-webkit-text-stroke:0.4px #6d7676;">29</div>
<div class="t" style="left:1408.86px;top:863.83px;font-size:15.22px;line-height:15px;font-weight:400;color:#6d7676;transform:scaleX(1.0933);transform-origin:0.00px 0;-webkit-text-stroke:0.4px #6d7676;">30</div>
<div class="t" style="left:1439.60px;top:863.83px;font-size:15.22px;line-height:15px;font-weight:400;color:#6d7676;transform:scaleX(1.0933);transform-origin:0.00px 0;-webkit-text-stroke:0.4px #6d7676;">31</div>
<div class="t" style="left:510.00px;top:888.23px;font-size:15.8px;line-height:16px;font-weight:400;color:#6d7676;letter-spacing:0.203px;-webkit-text-stroke:0.4px #6d7676;">Dec</div>
<div class="t" style="left:739.80px;top:940.27px;font-size:18.84px;line-height:19px;font-weight:400;color:#515e5f;letter-spacing:0.621px;">Twitter</div>
<div class="t" style="left:857.60px;top:940.27px;font-size:18.84px;line-height:19px;font-weight:400;color:#515e5f;letter-spacing:-0.010px;">Facebook</div>
<div class="t" style="left:999.50px;top:940.27px;font-size:18.84px;line-height:19px;font-weight:400;color:#515e5f;letter-spacing:0.259px;">Instagram</div>
<div class="t" style="left:1141.40px;top:940.27px;font-size:18.84px;line-height:19px;font-weight:400;color:#515e5f;letter-spacing:0.170px;">LinkedIn</div>
<div class="t" style="left:511.80px;top:1038.42px;font-size:16.38px;line-height:16px;font-weight:400;color:#515e5f;letter-spacing:-0.085px;">Audience Growth Metrics</div>
<div class="t" style="left:953.80px;top:1038.32px;font-size:16.38px;line-height:16px;font-weight:400;color:#515e5f;">Totals</div>
<div class="t" style="left:1035.00px;top:1038.32px;font-size:16.38px;line-height:16px;font-weight:400;color:#515e5f;transform:scaleX(0.9397);transform-origin:0.00px 0;">% Change</div>
<div class="t" style="left:512.00px;top:1091.82px;font-size:23.33px;line-height:23px;font-weight:400;color:#273333;letter-spacing:0.721px;-webkit-text-stroke:0.6px #273333;">Total Followers</div>
<div class="t" style="left:931.80px;top:1092.12px;font-size:21.88px;line-height:22px;font-weight:400;color:#273333;transform:scaleX(1.1703);transform-origin:1.00px 0;-webkit-text-stroke:0.3px #273333;">2,500</div>
<div class="t" style="left:1065.40px;top:1096.22px;font-size:16.96px;line-height:17px;font-weight:400;color:#0fc1b0;letter-spacing:1.152px;">3.6%</div>
<div class="t" style="left:512.00px;top:1155.42px;font-size:23.33px;line-height:23px;font-weight:400;color:#273333;letter-spacing:0.709px;-webkit-text-stroke:0.6px #273333;">Total Net Follower Growth</div>
<div class="t" style="left:968.60px;top:1156.02px;font-size:21.88px;line-height:22px;font-weight:400;color:#273333;transform:scaleX(1.1131);transform-origin:0.00px 0;-webkit-text-stroke:0.3px #273333;">39</div>
<div class="t" style="left:1174.60px;top:1168.67px;font-size:18.26px;line-height:18px;font-weight:400;color:#515e5f;letter-spacing:0.494px;">Total followers increased by</div>
</body></html>
